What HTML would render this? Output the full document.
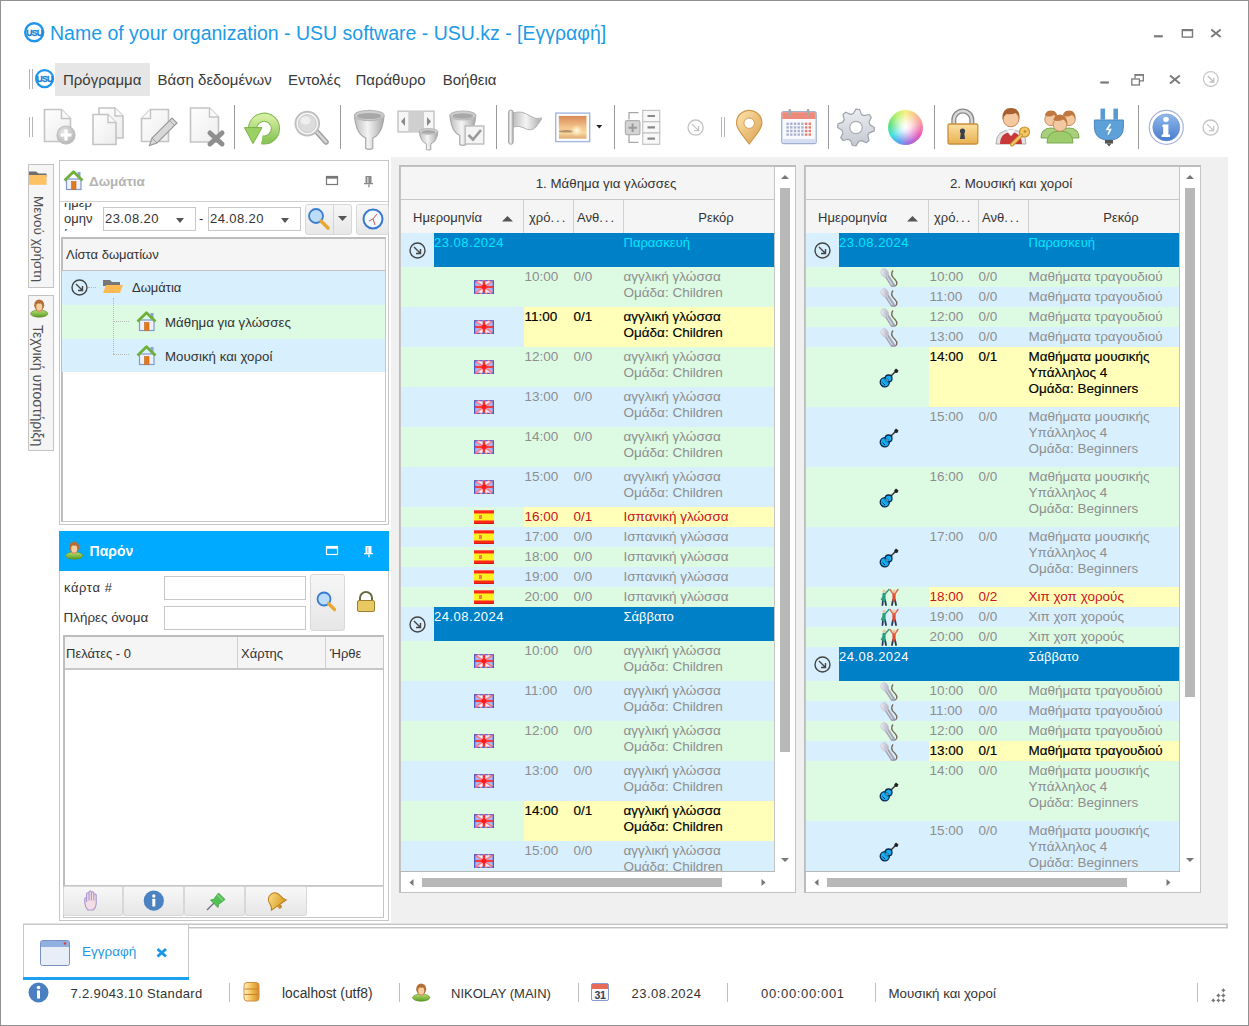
<!DOCTYPE html><html><head><meta charset="utf-8"><style>
*{margin:0;padding:0;box-sizing:border-box}
html,body{width:1249px;height:1026px;overflow:hidden;background:#fff}
body{font-family:"Liberation Sans",sans-serif;position:relative}
div{position:absolute}
.t{white-space:nowrap;line-height:1}
svg{position:absolute;overflow:visible}
</style></head><body>
<div style="left:0px;top:0px;width:1249px;height:1026px;border:1px solid #919191;background:#fff"></div>
<svg style="left:21.500000000000004px;top:20.099999999999998px" width="24.4" height="24.4"><circle cx="12.2" cy="12.2" r="9.0" fill="#fff" stroke="#1e96ec" stroke-width="2.4"/><text x="12.2" y="15.5" font-family="Liberation Sans" font-weight="700" font-size="8.6" text-anchor="middle" fill="#1880d8" stroke="#1880d8" stroke-width="0.3" letter-spacing="-0.7">USU</text></svg>
<div class="t" style="left:50px;top:24px;font-size:19.5px;color:#1c9be6">Name of your organization - USU software - USU.kz - [Εγγραφή]</div>
<svg style="left:1140px;top:20px" width="100" height="26"><rect x="14" y="15.2" width="8.8" height="2.2" fill="#7a7a7a"/><rect x="42.3" y="9.7" width="10.2" height="7.4" fill="none" stroke="#7a7a7a" stroke-width="1.4"/><rect x="42.3" y="9.2" width="10.2" height="2" fill="#7a7a7a"/><path d="M71.2 9.5 L80.7 17 M80.7 9.5 L71.2 17" stroke="#7a7a7a" stroke-width="1.9"/></svg>
<div style="left:29px;top:69px;width:1px;height:20px;background:#b5b5b5"></div>
<div style="left:32px;top:69px;width:1px;height:20px;background:#b5b5b5"></div>
<svg style="left:33.199999999999996px;top:67.10000000000001px" width="23.2" height="23.2"><circle cx="11.6" cy="11.6" r="8.5" fill="#fff" stroke="#1e96ec" stroke-width="2.2"/><text x="11.6" y="14.899999999999999" font-family="Liberation Sans" font-weight="700" font-size="8.6" text-anchor="middle" fill="#1880d8" stroke="#1880d8" stroke-width="0.3" letter-spacing="-0.7">USU</text></svg>
<div style="left:55px;top:63px;width:95px;height:33px;background:#e6e6e6"></div>
<div class="t" style="left:63px;top:72px;font-size:15px;color:#3a3a3a">Πρόγραμμα</div>
<div class="t" style="left:157.6px;top:72px;font-size:15px;color:#3a3a3a">Βάση δεδομένων</div>
<div class="t" style="left:288px;top:72px;font-size:15px;color:#3a3a3a">Εντολές</div>
<div class="t" style="left:355.4px;top:72px;font-size:15px;color:#3a3a3a">Παράθυρο</div>
<div class="t" style="left:442.7px;top:72px;font-size:15px;color:#3a3a3a">Βοήθεια</div>
<svg style="left:1090px;top:66px" width="140" height="26"><rect x="10.3" y="15.4" width="8.6" height="2.2" fill="#7a7a7a"/><rect x="41.8" y="13" width="7.6" height="6" fill="none" stroke="#7a7a7a" stroke-width="1.3"/><path d="M45 12.5 V8.7 H53.3 V14.8 H50" fill="none" stroke="#7a7a7a" stroke-width="1.3"/><rect x="45" y="8.2" width="8.3" height="1.6" fill="#7a7a7a"/><path d="M80 9.5 L89.8 17.5 M89.8 9.5 L80 17.5" stroke="#7a7a7a" stroke-width="1.9"/><circle cx="120.8" cy="13.1" r="7.4" fill="none" stroke="#c8c8c8" stroke-width="1.3"/><path d="M117.8 10 L123.8 16 M123.8 11.8 V16 H119.6" fill="none" stroke="#c0c0c0" stroke-width="1.3"/></svg>
<div style="left:29px;top:117px;width:1px;height:20px;background:#b5b5b5"></div>
<div style="left:32px;top:117px;width:1px;height:20px;background:#b5b5b5"></div>
<div style="left:234px;top:105px;width:1px;height:44px;background:#9a9a9a"></div>
<div style="left:340px;top:105px;width:1px;height:44px;background:#9a9a9a"></div>
<div style="left:496px;top:105px;width:1px;height:44px;background:#9a9a9a"></div>
<div style="left:614px;top:105px;width:1px;height:44px;background:#9a9a9a"></div>
<div style="left:828px;top:105px;width:1px;height:44px;background:#9a9a9a"></div>
<div style="left:934px;top:105px;width:1px;height:44px;background:#9a9a9a"></div>
<div style="left:1138px;top:105px;width:1px;height:44px;background:#9a9a9a"></div>
<div style="left:721px;top:117px;width:1px;height:20px;background:#b5b5b5"></div>
<div style="left:724px;top:117px;width:1px;height:20px;background:#b5b5b5"></div>
<svg style="left:0;top:0" width="1" height="1"><defs><linearGradient id="docg" x1="0" y1="0" x2="1" y2="1"><stop offset="0" stop-color="#ffffff"/><stop offset="1" stop-color="#ececec"/></linearGradient><radialGradient id="plusg" cx="0.4" cy="0.35" r="0.7"><stop offset="0" stop-color="#e6e6e6"/><stop offset="1" stop-color="#b4b4b4"/></radialGradient><linearGradient id="silv" x1="0" y1="0" x2="1" y2="0"><stop offset="0" stop-color="#bdbdbd"/><stop offset="0.45" stop-color="#f4f4f4"/><stop offset="1" stop-color="#a8a8a8"/></linearGradient><linearGradient id="greeng" x1="0" y1="0" x2="0" y2="1"><stop offset="0" stop-color="#d4eea0"/><stop offset="1" stop-color="#8cc65a"/></linearGradient></defs></svg><svg style="left:40px;top:104px" width="40" height="46"><path d="M4.5 5.5 h17 l9 9 v23 h-26 z" fill="url(#docg)" stroke="#c4c4c4" stroke-width="1.6"/><path d="M21.5 5.5 v9 h9" fill="#fafafa" stroke="#c4c4c4" stroke-width="1.4"/><circle cx="26" cy="31" r="9" fill="url(#plusg)" stroke="#bdbdbd" stroke-width="1.2"/><path d="M26 25.5 v11 M20.5 31 h11" stroke="#fff" stroke-width="3.2"/></svg><svg style="left:88px;top:104px" width="40" height="46"><path d="M11 4 h16 l8 8 v22 h-24 z" fill="url(#docg)" stroke="#c4c4c4" stroke-width="1.6"/><path d="M27 4 v8 h8" fill="#fafafa" stroke="#c4c4c4" stroke-width="1.4"/><path d="M5 10.5 h15 l8 8 v22 h-23 z" fill="url(#docg)" stroke="#c4c4c4" stroke-width="1.6"/><path d="M20 10.5 v8 h8" fill="#fafafa" stroke="#c4c4c4" stroke-width="1.4"/></svg><svg style="left:138px;top:104px" width="40" height="46"><path d="M12.5 5.5 h18 v32 h-27 v-23 z" fill="url(#docg)" stroke="#c4c4c4" stroke-width="1.6"/><path d="M12.5 5.5 v9 h-9" fill="#fafafa" stroke="#c4c4c4" stroke-width="1.4"/><path d="M11.5 41.5 l2.5 -7.5 l20 -20 l5 5 l-20 20 z" fill="#d8d8d8" stroke="#9a9a9a" stroke-width="1.2"/><path d="M14 34 l5 5" stroke="#9a9a9a" stroke-width="1"/><path d="M31.5 16.5 l5 5" stroke="#a0a0a0" stroke-width="1"/></svg><svg style="left:188px;top:104px" width="40" height="46"><path d="M2.5 4 h19 l9 9 v25 h-28 z" fill="url(#docg)" stroke="#c4c4c4" stroke-width="1.6"/><path d="M21.5 4 v9 h9" fill="#fafafa" stroke="#c4c4c4" stroke-width="1.4"/><path d="M22 29 l12 11 M34 29 l-12 11" stroke="#8e8e8e" stroke-width="5" stroke-linecap="round"/></svg><svg style="left:245px;top:108px" width="40" height="40"><path d="M8.5 25 A11.4 11.4 0 1 1 17 31.8" fill="none" stroke="#80b450" stroke-width="9.2"/><path d="M8.5 25 A11.4 11.4 0 1 1 17 31.8" fill="none" stroke="url(#greeng)" stroke-width="7.2"/><path d="M-0.5 19.6 h17.5 l-9 16 z" fill="#9ad064" stroke="#7cb048" stroke-width="1"/></svg><svg style="left:292px;top:108px" width="40" height="40"><path d="M25 24 l9 10" stroke="#a0a0a0" stroke-width="5.5" stroke-linecap="round"/><path d="M25 24 l9 10" stroke="#d8d8d8" stroke-width="2.5" stroke-linecap="round"/><circle cx="15.3" cy="15.6" r="11.8" fill="#fafafa" stroke="#c0c0c0" stroke-width="2"/><circle cx="15.3" cy="15.6" r="9" fill="#dcdcdc" stroke="#c8c8c8" stroke-width="1"/><ellipse cx="13.5" cy="12.5" rx="5" ry="4" fill="#efefef"/></svg><svg style="left:350px;top:106px" width="40" height="42"><path d="M4.5 9.5 q1.475 18.700000000000003 11.21 22.44 v10.54 q3.54 1.7000000000000002 7.08 0 v-10.54 q9.735000000000001 -3.74 11.21 -22.44 z" fill="url(#silv)" stroke="#a8a8a8" stroke-width="1.2"/><ellipse cx="19.25" cy="9.5" rx="14.75" ry="5.1" fill="#d0d0d0" stroke="#b8b8b8" stroke-width="1.2"/><ellipse cx="19.25" cy="10.0" rx="12.25" ry="3.06" fill="#a8a8a8"/></svg><svg style="left:396px;top:108px" width="44" height="40"><rect x="2" y="3.2" width="36" height="20.7" fill="#f6f6f6" stroke="#c4c4c4" stroke-width="1.4"/><rect x="12.3" y="3.5" width="15.7" height="20" fill="#cfcfcf"/><path d="M5 13.5 l4 -4.5 v9 z M31 9 l4 4.5 l-4 4.5 z" fill="#8a8a8a"/><path d="M23.3 23.4 q0.9300000000000002 10.340000000000002 7.0680000000000005 12.408000000000001 v5.828 q2.232 0.9400000000000001 4.464 0 v-5.828 q6.138000000000001 -2.068 7.0680000000000005 -12.408000000000001 z" fill="url(#silv)" stroke="#a8a8a8" stroke-width="1"/><ellipse cx="32.6" cy="23.4" rx="9.3" ry="2.82" fill="#d0d0d0" stroke="#b8b8b8" stroke-width="1"/><ellipse cx="32.6" cy="23.9" rx="6.800000000000001" ry="1.692" fill="#a8a8a8"/></svg><svg style="left:448px;top:106px" width="40" height="42"><path d="M2 9.5 q1.2850000000000001 16.5 9.766 19.8 v9.3 q3.0839999999999996 1.5 6.167999999999999 0 v-9.3 q8.481 -3.3 9.766 -19.8 z" fill="url(#silv)" stroke="#a8a8a8" stroke-width="1.2"/><ellipse cx="14.85" cy="9.5" rx="12.85" ry="4.5" fill="#d0d0d0" stroke="#b8b8b8" stroke-width="1.2"/><ellipse cx="14.85" cy="10.0" rx="10.35" ry="2.6999999999999997" fill="#a8a8a8"/><rect x="17.2" y="20" width="18.6" height="18" fill="#f4f4f4" stroke="#bcbcbc" stroke-width="1.4"/><path d="M20.5 29 l4.5 4.5 l8 -9.5" fill="none" stroke="#9a9a9a" stroke-width="2.6"/></svg><svg style="left:504px;top:106px" width="42" height="42"><path d="M9 7 q9 -3 17 3 q6 4 12 2 q-2 4 -6 9 q-5 5 -12 1 q-5 -3 -11 -1 z" fill="url(#silv)" stroke="#b4b4b4" stroke-width="1"/><rect x="4.6" y="4" width="4.6" height="34.3" rx="2.3" fill="url(#silv)" stroke="#a4a4a4" stroke-width="1"/></svg><svg style="left:553px;top:110px" width="52" height="36"><defs><linearGradient id="sky" x1="0" y1="0" x2="0" y2="1"><stop offset="0" stop-color="#d88a58"/><stop offset="0.5" stop-color="#f4c48c"/><stop offset="0.75" stop-color="#f8d8a0"/><stop offset="1" stop-color="#e0a870"/></linearGradient><radialGradient id="sun" cx="0.5" cy="0.5" r="0.5"><stop offset="0" stop-color="#fffbe8"/><stop offset="1" stop-color="#fff0c0" stop-opacity="0"/></radialGradient></defs><rect x="2.7" y="3.1" width="34" height="28.5" fill="#fff" stroke="#a4b6e0" stroke-width="1.4"/><rect x="5.8" y="5.9" width="27.7" height="22.7" fill="url(#sky)"/><path d="M6 21 q8 -2 14 0 v1 q-7 1 -14 0 z" fill="#8a6a50" opacity="0.6"/><circle cx="23.6" cy="20.4" r="6" fill="url(#sun)"/><path d="M43.3 15 h6 l-3 3.4 z" fill="#222"/></svg><svg style="left:622px;top:108px" width="42" height="40"><path d="M16.5 4.6 h-9.5 v7 M7 27 v7.3 h9.5" fill="none" stroke="#a8a8a8" stroke-width="1.3"/><rect x="3.4" y="12.7" width="14.5" height="14" rx="1.5" fill="#d4d4d4" stroke="#b0b0b0" stroke-width="1.2"/><path d="M10.6 15.5 v8.5 M6.4 19.7 h8.5" stroke="#9a9a9a" stroke-width="2"/><rect x="20.7" y="2.4" width="17" height="11.3" fill="#f8f8f8" stroke="#c4c4c4" stroke-width="1.2"/><rect x="20.7" y="13.7" width="17" height="11.3" fill="#f8f8f8" stroke="#c4c4c4" stroke-width="1.2"/><rect x="20.7" y="25" width="17" height="11.3" fill="#f8f8f8" stroke="#c4c4c4" stroke-width="1.2"/><path d="M25.5 8 h7.5 M25.5 19.3 h7.5 M25.5 30.6 h7.5" stroke="#8a8a8a" stroke-width="2.2"/></svg><svg style="left:686.4px;top:118.10000000000001px" width="19.2" height="19.2"><circle cx="9.6" cy="9.6" r="7.6" fill="none" stroke="#c4c4c4" stroke-width="1.3"/><path d="M6.1 6.1 L12.6 12.6 M12.6 8.1 V12.6 H8.1" fill="none" stroke="#c4c4c4" stroke-width="1.3"/></svg><svg style="left:732px;top:106px" width="36" height="42"><defs><linearGradient id="ping" x1="0" y1="0" x2="1" y2="1"><stop offset="0" stop-color="#fde6b0"/><stop offset="1" stop-color="#dca050"/></linearGradient></defs><path d="M17.2 38 C12 30 4.5 24 4.5 17 A12.7 12.7 0 0 1 29.9 17 C29.9 24 22.4 30 17.2 38 z" fill="url(#ping)" stroke="#d09848" stroke-width="1.2"/><circle cx="17.2" cy="17.2" r="5.2" fill="#fff" stroke="#c89040" stroke-width="0.8"/></svg><svg style="left:779px;top:106px" width="40" height="42"><rect x="2.7" y="5.6" width="34.5" height="32" rx="2" fill="#f8f9fc" stroke="#a0b0d4" stroke-width="1.3"/><rect x="3.3" y="6.2" width="33.3" height="6.8" fill="#ec8a7c"/><rect x="3.3" y="33" width="33.3" height="4" fill="#d6dff0"/><rect x="9.5" y="3" width="2.6" height="7" rx="1.2" fill="#a8a8a8"/><rect x="27.8" y="3" width="2.6" height="7" rx="1.2" fill="#a8a8a8"/><rect x="7.4" y="16.6" width="2.4" height="2.4" fill="#a8b2d0"/><rect x="11.1" y="16.6" width="2.4" height="2.4" fill="#a8b2d0"/><rect x="14.8" y="16.6" width="2.4" height="2.4" fill="#a8b2d0"/><rect x="18.5" y="16.6" width="2.4" height="2.4" fill="#a8b2d0"/><rect x="22.2" y="16.6" width="2.4" height="2.4" fill="#a8b2d0"/><rect x="25.9" y="16.6" width="2.4" height="2.4" fill="#ec7c6c"/><rect x="29.6" y="16.6" width="2.4" height="2.4" fill="#ec7c6c"/><rect x="7.4" y="20.2" width="2.4" height="2.4" fill="#a8b2d0"/><rect x="11.1" y="20.2" width="2.4" height="2.4" fill="#a8b2d0"/><rect x="14.8" y="20.2" width="2.4" height="2.4" fill="#a8b2d0"/><rect x="18.5" y="20.2" width="2.4" height="2.4" fill="#a8b2d0"/><rect x="22.2" y="20.2" width="2.4" height="2.4" fill="#a8b2d0"/><rect x="25.9" y="20.2" width="2.4" height="2.4" fill="#ec7c6c"/><rect x="29.6" y="20.2" width="2.4" height="2.4" fill="#ec7c6c"/><rect x="7.4" y="23.8" width="2.4" height="2.4" fill="#a8b2d0"/><rect x="11.1" y="23.8" width="2.4" height="2.4" fill="#a8b2d0"/><rect x="14.8" y="23.8" width="2.4" height="2.4" fill="#a8b2d0"/><rect x="18.5" y="23.8" width="2.4" height="2.4" fill="#a8b2d0"/><rect x="22.2" y="23.8" width="2.4" height="2.4" fill="#a8b2d0"/><rect x="25.9" y="23.8" width="2.4" height="2.4" fill="#ec7c6c"/><rect x="29.6" y="23.8" width="2.4" height="2.4" fill="#ec7c6c"/><rect x="7.4" y="27.4" width="2.4" height="2.4" fill="#a8b2d0"/><rect x="11.1" y="27.4" width="2.4" height="2.4" fill="#a8b2d0"/><rect x="14.8" y="27.4" width="2.4" height="2.4" fill="#a8b2d0"/><rect x="18.5" y="27.4" width="2.4" height="2.4" fill="#a8b2d0"/><rect x="22.2" y="27.4" width="2.4" height="2.4" fill="#a8b2d0"/><rect x="25.9" y="27.4" width="2.4" height="2.4" fill="#ec7c6c"/><rect x="29.6" y="27.4" width="2.4" height="2.4" fill="#ec7c6c"/></svg><svg style="left:835px;top:106px" width="42" height="42"><defs><linearGradient id="gearg" x1="0" y1="0" x2="0" y2="1"><stop offset="0" stop-color="#eceef2"/><stop offset="1" stop-color="#c4c8d0"/></linearGradient></defs><path d="M39.4 21.5 L39.0 25.1 L34.1 26.9 L32.8 29.4 L34.0 34.5 L31.2 36.8 L26.4 34.6 L23.8 35.4 L21.0 39.9 L17.4 39.5 L15.6 34.6 L13.1 33.3 L8.0 34.5 L5.7 31.7 L7.9 26.9 L7.1 24.3 L2.6 21.5 L3.0 17.9 L7.9 16.1 L9.2 13.6 L8.0 8.5 L10.8 6.2 L15.6 8.4 L18.2 7.6 L21.0 3.1 L24.6 3.5 L26.4 8.4 L28.9 9.7 L34.0 8.5 L36.3 11.3 L34.1 16.1 L34.9 18.7 z" fill="url(#gearg)" stroke="#a0a4ac" stroke-width="1.2" stroke-linejoin="round"/><circle cx="21" cy="21.5" r="6.2" fill="#fff" stroke="#a8acb4" stroke-width="1.2"/></svg><div style="left:888px;top:110px;width:35px;height:35px;border-radius:50%;background:conic-gradient(from 0deg,#f8f080,#f8a0a0 70deg,#e858b8 120deg,#a070e0 170deg,#50b0f0 210deg,#40e0e0 240deg,#60e080 280deg,#b0f070 320deg,#f8f080)"></div><div style="left:888px;top:110px;width:35px;height:35px;border-radius:50%;background:radial-gradient(circle,#fff 0%,rgba(255,255,255,0.8) 18%,rgba(255,255,255,0) 62%)"></div><svg style="left:944px;top:104px" width="38" height="44"><defs><linearGradient id="lockg" x1="0" y1="0" x2="0" y2="1"><stop offset="0" stop-color="#fbe0a0"/><stop offset="1" stop-color="#e8b050"/></linearGradient></defs><path d="M9.8 21 V16 a9 9 0 0 1 18 0 V21" fill="none" stroke="#8a8a8a" stroke-width="5"/><path d="M9.8 21 V16 a9 9 0 0 1 18 0 V21" fill="none" stroke="#d8d8d8" stroke-width="2.4"/><rect x="4" y="20" width="29.8" height="20" rx="1.5" fill="url(#lockg)" stroke="#c89040" stroke-width="1.3"/><circle cx="18.5" cy="27" r="2.6" fill="#384050"/><path d="M17 27 h3 l1 8 h-5 z" fill="#384050"/></svg><svg style="left:992px;top:104px" width="40" height="44"><path d="M4 40 q0 -14 15 -14 q15 0 15 14 z" fill="#e4e4e4" stroke="#b0b0b0" stroke-width="1"/><path d="M8 40 q0 -11 11 -12 q11 1 11 12 z" fill="#c83838"/><path d="M14 26 l5 6 l5 -6 z" fill="#fff" stroke="#ccc" stroke-width="0.6"/><circle cx="19" cy="15" r="7.8" fill="#f4c8a0" stroke="#c88a5a" stroke-width="1"/><path d="M10.5 16 q-1 -12 8.5 -12 q9.5 0 8.5 12 q-1 -6 -4 -7 q-3 2 -9 1 q-3 2 -4 6" fill="#a86030"/><circle cx="32.5" cy="28" r="5" fill="#f4c860" stroke="#c8903a" stroke-width="1.2"/><circle cx="33" cy="27.5" r="1.4" fill="#c8903a"/><path d="M29 31.5 l-9 9" stroke="#c8903a" stroke-width="4" stroke-linecap="round"/><path d="M29 31.5 l-9 9" stroke="#f4c860" stroke-width="2.2" stroke-linecap="round"/></svg><svg style="left:1038px;top:104px" width="44" height="44"><path d="M3 34 q0 -10 10 -10 q10 0 10 10 z" fill="#a8d07c" stroke="#7aaa50" stroke-width="1"/><path d="M21 34 q0 -10 10 -10 q10 0 10 10 z" fill="#a8d07c" stroke="#7aaa50" stroke-width="1"/><circle cx="13" cy="15.5" r="6.2" fill="#f2c8a0" stroke="#c0885a" stroke-width="0.9"/><path d="M6.3 16.5 q-0.5 -9.920000000000002 6.7 -9.920000000000002 q7.2 0 6.7 9.920000000000002 q-1 -4.34 -3.7199999999999998 -5.58 q-5.58 3.1 -9.3 0 z" fill="#c07840"/><circle cx="31" cy="15.5" r="6.2" fill="#f2c8a0" stroke="#c0885a" stroke-width="0.9"/><path d="M24.3 16.5 q-0.5 -9.920000000000002 6.7 -9.920000000000002 q7.2 0 6.7 9.920000000000002 q-1 -4.34 -3.7199999999999998 -5.58 q-5.58 3.1 -9.3 0 z" fill="#c07840"/><path d="M9 39 q0 -12 13 -12 q13 0 13 12 z" fill="#9ccc6c" stroke="#7aaa50" stroke-width="1"/><circle cx="22" cy="20.5" r="6.8" fill="#f2c8a0" stroke="#c0885a" stroke-width="0.9"/><path d="M14.7 21.5 q-0.5 -10.88 7.3 -10.88 q7.8 0 7.3 10.88 q-1 -4.76 -4.08 -6.12 q-6.12 3.4 -10.2 0 z" fill="#c07840"/></svg><svg style="left:1092px;top:104px" width="34" height="44"><rect x="8.5" y="4.6" width="4.6" height="11" fill="#5a9ad4"/><rect x="21.4" y="4.6" width="4.6" height="11" fill="#5a9ad4"/><path d="M2.4 16 h29 v7 q0 11 -11 13 h-7 q-11 -2 -11 -13 z" fill="#5ea0d8" stroke="#4a88c0" stroke-width="1"/><path d="M18.5 20 l-3.5 5.5 h3.5 l-2.5 5" fill="none" stroke="#fff" stroke-width="1.6"/><rect x="13" y="36" width="8" height="3.5" fill="#555"/><path d="M14.5 39.5 h5 l-2.5 3 z" fill="#555"/></svg><svg style="left:1146px;top:107px" width="42" height="42"><defs><linearGradient id="ig" x1="0" y1="0" x2="0" y2="1"><stop offset="0" stop-color="#90b8ec"/><stop offset="1" stop-color="#4a7ccc"/></linearGradient></defs><circle cx="20.3" cy="20.4" r="17" fill="#fff" stroke="#a8b4d8" stroke-width="1.2"/><circle cx="20.3" cy="20.4" r="13.5" fill="url(#ig)" stroke="#6a90d0" stroke-width="0.6"/><ellipse cx="20" cy="12.5" rx="2.8" ry="2.4" fill="#fff"/><path d="M16.8 17.5 h5.6 v10 h1.6 v2.6 h-8.4 v-2.6 h1.6 v-7.4 h-1 z" fill="#fff"/></svg><svg style="left:1201.2px;top:118.2px" width="19.2" height="19.2"><circle cx="9.6" cy="9.6" r="7.6" fill="none" stroke="#c4c4c4" stroke-width="1.3"/><path d="M6.1 6.1 L12.6 12.6 M12.6 8.1 V12.6 H8.1" fill="none" stroke="#c4c4c4" stroke-width="1.3"/></svg>
<div style="left:28px;top:164px;width:26px;height:124px;background:#f5f5f5;border:1px solid #c3c3c3"></div>
<svg style="left:28px;top:170px" width="20" height="16"><path d="M1 1.5 h7 l2.5 2 h8 v3.5 H1 z" fill="#6e6e6e"/><rect x="1" y="5" width="17.5" height="9.8" fill="#fcc264"/></svg>
<div class="t" style="left:31px;top:196px;font-size:13.5px;color:#505050;writing-mode:vertical-rl">Μενού χρήστη</div>
<div style="left:28px;top:295px;width:26px;height:156px;background:#f5f5f5;border:1px solid #c3c3c3"></div>
<svg style="left:30px;top:299px" width="19" height="19"><defs><linearGradient id="pg30299" x1="0" y1="0" x2="0" y2="1"><stop offset="0" stop-color="#b8e070"/><stop offset="1" stop-color="#5c9c24"/></linearGradient></defs><ellipse cx="9.2" cy="14.6" rx="8.6" ry="3.6" fill="url(#pg30299)" stroke="#5a8a2a" stroke-width="0.6"/><rect x="7.3" y="9" width="3.8" height="4" fill="#d89a68"/><ellipse cx="9.2" cy="6.2" rx="5" ry="5.8" fill="#b86e34"/><ellipse cx="9.2" cy="7.8" rx="3" ry="4" fill="#f6cfa0"/><path d="M5.5 5 q3.5 -3 7.5 0 q-1.5 -1 -3.7 -0.6 q-2.2 -0.4 -3.8 0.6" fill="#8a4a1a"/></svg>
<div class="t" style="left:31px;top:325px;font-size:14px;color:#505050;writing-mode:vertical-rl">Τεχνική υποστήριξη</div>
<div style="left:59px;top:160px;width:330px;height:365px;border:1px solid #c6c6c6;background:#fff"></div>
<svg style="left:63px;top:170px" width="22" height="21"><rect x="14.5" y="2" width="3" height="6" fill="#8aa0d8"/><rect x="3.5" y="9" width="14.5" height="10.5" fill="#eef1fa" stroke="#8298d0" stroke-width="1.2"/><rect x="8.5" y="11.5" width="4.5" height="8" fill="#e07a20" stroke="#c86a18" stroke-width="0.6"/><path d="M1.5 10.5 L10.5 1.8 L19.5 10.5" fill="none" stroke="#70b03a" stroke-width="2.8" stroke-linejoin="round"/></svg>
<div class="t" style="left:89px;top:175px;font-size:13.5px;font-weight:700;color:#b4b4b4">Δωμάτια</div>
<svg style="left:324px;top:174px" width="50" height="16"><rect x="2.5" y="2.5" width="11" height="8" fill="none" stroke="#777" stroke-width="1.2"/><rect x="2.5" y="2.5" width="11" height="2.2" fill="#777"/><path d="M41.5 2 h6 v7 h1.5 v1.3 h-9 v-1.3 h1.5 z" fill="#8a8a8a"/><rect x="43" y="3" width="1.6" height="6" fill="#c8c8c8"/><rect x="44.3" y="10.3" width="1.3" height="3" fill="#8a8a8a"/></svg>
<div style="left:60px;top:201px;width:328px;height:1px;background:#d0d0d0"></div>
<div style="left:63px;top:203px;width:38px;height:28px;overflow:hidden"><div class="t" style="left:1px;top:-8px;font-size:13px;color:#333;line-height:16px;white-space:normal;width:38px">ημερ ομην ία</div></div>
<div style="left:103px;top:207px;width:93px;height:24px;border:1px solid #c8c8c8;background:#fff"></div>
<div class="t" style="left:105px;top:212px;font-size:13px;color:#333;letter-spacing:0.4px">23.08.20</div>
<svg style="left:175.5px;top:217.5px" width="10" height="6"><path d="M0 0 h8 l-4 5 z" fill="#555"/></svg>
<div style="left:208px;top:207px;width:93px;height:24px;border:1px solid #c8c8c8;background:#fff"></div>
<div class="t" style="left:210px;top:212px;font-size:13px;color:#333;letter-spacing:0.4px">24.08.20</div>
<svg style="left:280.5px;top:217.5px" width="10" height="6"><path d="M0 0 h8 l-4 5 z" fill="#555"/></svg>
<div class="t" style="left:199px;top:212px;font-size:13px;color:#333">-</div>
<div style="left:305px;top:204px;width:47px;height:31px;border:1px solid #d8d8d8;border-radius:3px;background:linear-gradient(#f6f6f6,#e8e8e8)"></div>
<div style="left:333px;top:205px;width:1px;height:29px;background:#d4d4d4"></div>
<svg style="left:307px;top:207px" width="24" height="24"><circle cx="9" cy="9" r="7" fill="#bcdcfa" stroke="#3a7cd0" stroke-width="1.8"/><path d="M14 14 l7 7" stroke="#e8a830" stroke-width="3.5" stroke-linecap="round"/></svg>
<svg style="left:338px;top:216px" width="10" height="6"><path d="M0 0 h9 l-4.5 5 z" fill="#555"/></svg>
<div style="left:356px;top:204px;width:33px;height:31px;border:1px solid #d8d8d8;border-radius:3px;background:linear-gradient(#f6f6f6,#e8e8e8)"></div>
<svg style="left:362px;top:208px" width="22" height="22"><circle cx="11" cy="11" r="9.5" fill="#f4f8ff" stroke="#3a78d0" stroke-width="2"/><path d="M11 11 l4 -5 M11 11 l2 6 M11 11 l-4 2" stroke="#e05050" stroke-width="1"/></svg>
<div style="left:61px;top:237px;width:325px;height:285px;border:1px solid #c6c6c6;border-left:2px solid #bdbdbd;border-top:2px solid #bdbdbd;background:#fff"></div>
<div style="left:63px;top:239px;width:322px;height:32px;background:#f5f5f5;border-bottom:1px solid #c4c4c4"></div>
<div class="t" style="left:66px;top:248px;font-size:13px;color:#333">Λίστα δωματίων</div>
<div style="left:62px;top:271px;width:323px;height:34px;background:#d8f0fe"></div>
<div style="left:62px;top:305px;width:323px;height:34px;background:#ddfae3"></div>
<div style="left:62px;top:339px;width:323px;height:33px;background:#d8f0fe"></div>
<svg style="left:69.8px;top:278.0px" width="19.0" height="19.0"><circle cx="9.5" cy="9.5" r="7.5" fill="none" stroke="#444" stroke-width="1.4"/><path d="M6.0 6.0 L12.5 12.5 M12.5 8.0 V12.5 H8.0" fill="none" stroke="#444" stroke-width="1.4"/></svg>
<div style="left:88px;top:287px;width:8px;border-top:1px dotted #b8b8b8"></div>
<div style="left:113px;top:298px;height:56px;border-left:1px dotted #b8b8b8"></div>
<div style="left:113px;top:321px;width:16px;border-top:1px dotted #b8b8b8"></div>
<div style="left:113px;top:354px;width:16px;border-top:1px dotted #b8b8b8"></div>
<svg style="left:102px;top:279px" width="22" height="16"><path d="M1 1 h7 l2 2 h8 v4 H1 z" fill="#777"/><path d="M1 14 l3 -8 h17 l-3 8 z" fill="#fcb955"/></svg>
<div class="t" style="left:132px;top:281px;font-size:13px;color:#333">Δωμάτια</div>
<svg style="left:136px;top:311px" width="22" height="21"><rect x="14.5" y="2" width="3" height="6" fill="#8aa0d8"/><rect x="3.5" y="9" width="14.5" height="10.5" fill="#eef1fa" stroke="#8298d0" stroke-width="1.2"/><rect x="8.5" y="11.5" width="4.5" height="8" fill="#e07a20" stroke="#c86a18" stroke-width="0.6"/><path d="M1.5 10.5 L10.5 1.8 L19.5 10.5" fill="none" stroke="#70b03a" stroke-width="2.8" stroke-linejoin="round"/></svg>
<div class="t" style="left:165px;top:316px;font-size:13.3px;color:#333">Μάθημα για γλώσσες</div>
<svg style="left:136px;top:345px" width="22" height="21"><rect x="14.5" y="2" width="3" height="6" fill="#8aa0d8"/><rect x="3.5" y="9" width="14.5" height="10.5" fill="#eef1fa" stroke="#8298d0" stroke-width="1.2"/><rect x="8.5" y="11.5" width="4.5" height="8" fill="#e07a20" stroke="#c86a18" stroke-width="0.6"/><path d="M1.5 10.5 L10.5 1.8 L19.5 10.5" fill="none" stroke="#70b03a" stroke-width="2.8" stroke-linejoin="round"/></svg>
<div class="t" style="left:165px;top:350px;font-size:13.3px;color:#333">Μουσική και χοροί</div>
<div style="left:59px;top:531px;width:330px;height:390px;border:1px solid #c6c6c6;background:#fff"></div>
<div style="left:59px;top:531px;width:330px;height:40px;background:#00aaff"></div>
<svg style="left:64.5px;top:540.5px" width="19" height="19"><defs><linearGradient id="pg64540" x1="0" y1="0" x2="0" y2="1"><stop offset="0" stop-color="#b8e070"/><stop offset="1" stop-color="#5c9c24"/></linearGradient></defs><ellipse cx="9.2" cy="14.6" rx="8.6" ry="3.6" fill="url(#pg64540)" stroke="#5a8a2a" stroke-width="0.6"/><rect x="7.3" y="9" width="3.8" height="4" fill="#d89a68"/><ellipse cx="9.2" cy="6.2" rx="5" ry="5.8" fill="#b86e34"/><ellipse cx="9.2" cy="7.8" rx="3" ry="4" fill="#f6cfa0"/><path d="M5.5 5 q3.5 -3 7.5 0 q-1.5 -1 -3.7 -0.6 q-2.2 -0.4 -3.8 0.6" fill="#8a4a1a"/></svg>
<div class="t" style="left:89.6px;top:544px;font-size:14px;font-weight:700;color:#fff">Παρόν</div>
<svg style="left:324px;top:544px" width="50" height="16"><rect x="2.5" y="2.5" width="11" height="8" fill="none" stroke="#fff" stroke-width="1.2"/><rect x="2.5" y="2.5" width="11" height="2.2" fill="#fff"/><path d="M41.5 2 h6 v7 h1.5 v1.3 h-9 v-1.3 h1.5 z" fill="#fff"/><rect x="43" y="3" width="1.6" height="6" fill="#9ad4ff"/><rect x="44.3" y="10.3" width="1.3" height="3" fill="#fff"/></svg>
<div class="t" style="left:64px;top:581px;font-size:13px;color:#333;letter-spacing:0.6px">κάρτα #</div>
<div class="t" style="left:63.6px;top:611px;font-size:13.4px;color:#333">Πλήρες όνομα</div>
<div style="left:164px;top:576px;width:142px;height:24px;border:1px solid #c8c8c8;background:#fff"></div>
<div style="left:164px;top:606px;width:142px;height:24px;border:1px solid #c8c8c8;background:#fff"></div>
<div style="left:310px;top:574px;width:35px;height:57px;border:1px solid #d8d8d8;border-radius:3px;background:linear-gradient(#f6f6f6,#e6e6e6)"></div>
<svg style="left:315px;top:590px" width="24" height="24"><circle cx="9" cy="9" r="6.5" fill="#bcdcfa" stroke="#3a7cd0" stroke-width="1.8"/><path d="M13.5 13.5 l6 6" stroke="#e8a830" stroke-width="3.2" stroke-linecap="round"/></svg>
<svg style="left:356px;top:591px" width="20" height="22"><path d="M4 10 V7 a6 6 0 0 1 12 0 V10" fill="none" stroke="#6a6a40" stroke-width="2"/><rect x="1.5" y="9.5" width="17" height="11" rx="1.5" fill="#e8c860" stroke="#9a8030"/></svg>
<div style="left:63px;top:635px;width:321px;height:251px;border:1px solid #c6c6c6;border-left:2px solid #bdbdbd;border-top:2px solid #bdbdbd;background:#fff"></div>
<div style="left:65px;top:637px;width:318px;height:33px;background:#f5f5f5;border-bottom:2px solid #c8c8c8"></div>
<div style="left:237px;top:637px;width:1px;height:32px;background:#d0d0d0"></div>
<div style="left:325px;top:637px;width:1px;height:32px;background:#d0d0d0"></div>
<div class="t" style="left:66px;top:647px;font-size:13px;color:#333">Πελάτες - 0</div>
<div class="t" style="left:241px;top:647px;font-size:13px;color:#333">Χάρτης</div>
<div class="t" style="left:330px;top:647px;font-size:13px;color:#333">Ήρθε</div>
<div style="left:63px;top:886px;width:321px;height:32px;background:#fff;border:1px solid #c6c6c6;border-top:1px solid #d0d0d0"></div>
<div style="left:63px;top:886px;width:60px;height:30px;background:linear-gradient(#f8f8f8,#e6e6e6);border:1px solid #d8d8d8;border-radius:2px"></div>
<div style="left:123px;top:886px;width:61px;height:30px;background:linear-gradient(#f8f8f8,#e6e6e6);border:1px solid #d8d8d8;border-radius:2px"></div>
<div style="left:184px;top:886px;width:61px;height:30px;background:linear-gradient(#f8f8f8,#e6e6e6);border:1px solid #d8d8d8;border-radius:2px"></div>
<div style="left:245px;top:886px;width:62px;height:30px;background:linear-gradient(#f8f8f8,#e6e6e6);border:1px solid #d8d8d8;border-radius:2px"></div>
<svg style="left:83px;top:889px" width="20" height="24"><path d="M5 21 q-3 -3 -3.2 -7 v-4.5 q0.9 -1.5 1.8 0 v3 V4.5 q1.2 -1.6 2.4 0 V11 V2.8 q1.2 -1.6 2.4 0 V11 V3.6 q1.2 -1.6 2.4 0 V11 V5.8 q1.2 -1.6 2.4 0 V15 q-0.3 4 -3 6 z" fill="#f4dce4" stroke="#a898d0" stroke-width="1.1" stroke-linejoin="round"/></svg>
<svg style="left:143px;top:890px" width="22" height="22"><circle cx="10.8" cy="10.7" r="10.1" fill="#4a82c2"/><circle cx="10.8" cy="6" r="1.7" fill="#fff"/><rect x="9.3" y="8.8" width="3" height="7.6" rx="0.5" fill="#fff"/></svg>
<svg style="left:203px;top:890px" width="24" height="22"><path d="M4 20 l7 -7" stroke="#6a6a80" stroke-width="1.3"/><path d="M10.5 9.5 l5 -6.5 l6.5 6.5 l-6.5 5 l-0.5 3 l-7.5 -7.5 z" fill="#52c052" stroke="#3a9a3a" stroke-width="0.8"/><path d="M14 4.5 l6 6" stroke="#7ad87a" stroke-width="1.5"/></svg>
<svg style="left:263px;top:889px" width="26" height="24"><defs><linearGradient id="bellg" x1="0" y1="0" x2="1" y2="1"><stop offset="0" stop-color="#fce890"/><stop offset="1" stop-color="#d89820"/></linearGradient></defs><g transform="rotate(-35 13 12)"><path d="M4 17 q2 -2 2.5 -7 q0.5 -6 6.5 -6.5 q6 0.5 6.5 6.5 q0.5 5 2.5 7 z" fill="url(#bellg)" stroke="#b88020" stroke-width="1"/><circle cx="13" cy="19" r="2" fill="#c89030"/></g></svg>
<div style="left:391px;top:157px;width:837px;height:767px;background:#f0f0f0"></div>
<div style="left:399px;top:165px;width:397px;height:728px;background:#fff;border:1px solid #c4c4c4;border-left:2px solid #bcbcbc;border-top:2px solid #bcbcbc"></div><div style="left:400px;top:166px;width:375px;height:34px;background:#f5f5f5;border:1px solid #c4c4c4;border-right:1px solid #c4c4c4"></div><div class="t" style="left:400px;top:177px;width:412px;text-align:center;font-size:13.3px;color:#333">1. Μάθημα για γλώσσες</div><div style="left:400px;top:199px;width:375px;height:35px;background:#f5f5f5;border:1px solid #c4c4c4;border-top:1px solid #c8c8c8"></div><div style="left:523px;top:200px;width:1px;height:33px;background:#d0d0d0"></div><div style="left:573px;top:200px;width:1px;height:33px;background:#d0d0d0"></div><div style="left:623px;top:200px;width:1px;height:33px;background:#d0d0d0"></div><div class="t" style="left:413px;top:211px;font-size:13px;color:#333">Ημερομηνία</div><svg style="left:501.5px;top:215.5px" width="12" height="7"><path d="M0 5.5 L5.5 0 L11 5.5 z" fill="#555"/></svg><div class="t" style="left:529px;top:211px;font-size:13px;color:#333">χρό<span style='letter-spacing:2px'>...</span></div><div class="t" style="left:577px;top:211px;font-size:13px;color:#333">Ανθ<span style='letter-spacing:2px'>...</span></div><div class="t" style="left:623px;top:211px;width:186px;text-align:center;font-size:13px;color:#333">Ρεκόρ</div><div style="left:401px;top:233px;width:374px;height:638px;overflow:hidden"><div style="left:0px;top:0px;width:33px;height:34px;background:#d8f0fe"></div><div style="left:33px;top:0px;width:341px;height:34px;background:#0080c6"></div><svg style="left:6.5px;top:7.5px" width="19.0" height="19.0"><circle cx="9.5" cy="9.5" r="7.5" fill="none" stroke="#444" stroke-width="1.4"/><path d="M6.0 6.0 L12.5 12.5 M12.5 8.0 V12.5 H8.0" fill="none" stroke="#444" stroke-width="1.4"/></svg><div class="t" style="left:33px;top:2.5px;font-size:13px;color:#00e8ff;letter-spacing:0.5px">23.08.2024</div><div class="t" style="left:222.5px;top:2.5px;font-size:13px;color:#00e8ff">Παρασκευή</div><div style="left:0px;top:34px;width:374px;height:40px;background:#ddfae3"></div><svg style="left:73px;top:47px" width="20" height="14"><rect x="0" y="0" width="20" height="14" fill="#eef0fc"/><path d="M1 2 L7 6 H1 z M19 2 L13 6 H19 z M1 12 L7 8 H1 z M19 12 L13 8 H19 z" fill="#a8b8f4"/><path d="M1 1 L19 13 M19 1 L1 13" stroke="#f47a8a" stroke-width="1.6"/><path d="M10 1 V13" stroke="#ff2a2a" stroke-width="2.6"/><path d="M1 7 H19" stroke="#ff3a3a" stroke-width="2.2"/><circle cx="10" cy="7" r="2.4" fill="#ff1a1a"/><path d="M0 0.6 H20 M0 13.4 H20" stroke="#e87080" stroke-width="1.2"/><rect x="0.6" y="0.6" width="18.8" height="12.8" fill="none" stroke="#5a6ad8" stroke-width="1.2" stroke-dasharray="3 2"/><path d="M0.6 0.6 V13.4 M19.4 0.6 V13.4" stroke="#4a5ac8" stroke-width="1.2"/></svg><div class="t" style="left:123.5px;top:36.5px;font-size:13.5px;color:#8e8e8e;font-weight:400">10:00</div><div class="t" style="left:172.5px;top:36.5px;font-size:13.5px;color:#8e8e8e;font-weight:400">0/0</div><div class="t" style="left:222.5px;top:36.5px;font-size:13.5px;color:#8e8e8e;font-weight:400">αγγλική γλώσσα</div><div class="t" style="left:222.5px;top:52.5px;font-size:13.5px;color:#8e8e8e;font-weight:400">Ομάδα: Children</div><div style="left:0px;top:74px;width:374px;height:40px;background:#d8f0fe"></div><div style="left:123px;top:74px;width:251px;height:40px;background:#ffffb9"></div><svg style="left:73px;top:87px" width="20" height="14"><rect x="0" y="0" width="20" height="14" fill="#eef0fc"/><path d="M1 2 L7 6 H1 z M19 2 L13 6 H19 z M1 12 L7 8 H1 z M19 12 L13 8 H19 z" fill="#a8b8f4"/><path d="M1 1 L19 13 M19 1 L1 13" stroke="#f47a8a" stroke-width="1.6"/><path d="M10 1 V13" stroke="#ff2a2a" stroke-width="2.6"/><path d="M1 7 H19" stroke="#ff3a3a" stroke-width="2.2"/><circle cx="10" cy="7" r="2.4" fill="#ff1a1a"/><path d="M0 0.6 H20 M0 13.4 H20" stroke="#e87080" stroke-width="1.2"/><rect x="0.6" y="0.6" width="18.8" height="12.8" fill="none" stroke="#5a6ad8" stroke-width="1.2" stroke-dasharray="3 2"/><path d="M0.6 0.6 V13.4 M19.4 0.6 V13.4" stroke="#4a5ac8" stroke-width="1.2"/></svg><div class="t" style="left:123.5px;top:76.5px;font-size:13.5px;color:#000;font-weight:400;-webkit-text-stroke:0.15px #000">11:00</div><div class="t" style="left:172.5px;top:76.5px;font-size:13.5px;color:#000;font-weight:400;-webkit-text-stroke:0.15px #000">0/1</div><div class="t" style="left:222.5px;top:76.5px;font-size:13.5px;color:#000;font-weight:400;-webkit-text-stroke:0.15px #000">αγγλική γλώσσα</div><div class="t" style="left:222.5px;top:92.5px;font-size:13.5px;color:#000;font-weight:400;-webkit-text-stroke:0.15px #000">Ομάδα: Children</div><div style="left:0px;top:114px;width:374px;height:40px;background:#ddfae3"></div><svg style="left:73px;top:127px" width="20" height="14"><rect x="0" y="0" width="20" height="14" fill="#eef0fc"/><path d="M1 2 L7 6 H1 z M19 2 L13 6 H19 z M1 12 L7 8 H1 z M19 12 L13 8 H19 z" fill="#a8b8f4"/><path d="M1 1 L19 13 M19 1 L1 13" stroke="#f47a8a" stroke-width="1.6"/><path d="M10 1 V13" stroke="#ff2a2a" stroke-width="2.6"/><path d="M1 7 H19" stroke="#ff3a3a" stroke-width="2.2"/><circle cx="10" cy="7" r="2.4" fill="#ff1a1a"/><path d="M0 0.6 H20 M0 13.4 H20" stroke="#e87080" stroke-width="1.2"/><rect x="0.6" y="0.6" width="18.8" height="12.8" fill="none" stroke="#5a6ad8" stroke-width="1.2" stroke-dasharray="3 2"/><path d="M0.6 0.6 V13.4 M19.4 0.6 V13.4" stroke="#4a5ac8" stroke-width="1.2"/></svg><div class="t" style="left:123.5px;top:116.5px;font-size:13.5px;color:#8e8e8e;font-weight:400">12:00</div><div class="t" style="left:172.5px;top:116.5px;font-size:13.5px;color:#8e8e8e;font-weight:400">0/0</div><div class="t" style="left:222.5px;top:116.5px;font-size:13.5px;color:#8e8e8e;font-weight:400">αγγλική γλώσσα</div><div class="t" style="left:222.5px;top:132.5px;font-size:13.5px;color:#8e8e8e;font-weight:400">Ομάδα: Children</div><div style="left:0px;top:154px;width:374px;height:40px;background:#d8f0fe"></div><svg style="left:73px;top:167px" width="20" height="14"><rect x="0" y="0" width="20" height="14" fill="#eef0fc"/><path d="M1 2 L7 6 H1 z M19 2 L13 6 H19 z M1 12 L7 8 H1 z M19 12 L13 8 H19 z" fill="#a8b8f4"/><path d="M1 1 L19 13 M19 1 L1 13" stroke="#f47a8a" stroke-width="1.6"/><path d="M10 1 V13" stroke="#ff2a2a" stroke-width="2.6"/><path d="M1 7 H19" stroke="#ff3a3a" stroke-width="2.2"/><circle cx="10" cy="7" r="2.4" fill="#ff1a1a"/><path d="M0 0.6 H20 M0 13.4 H20" stroke="#e87080" stroke-width="1.2"/><rect x="0.6" y="0.6" width="18.8" height="12.8" fill="none" stroke="#5a6ad8" stroke-width="1.2" stroke-dasharray="3 2"/><path d="M0.6 0.6 V13.4 M19.4 0.6 V13.4" stroke="#4a5ac8" stroke-width="1.2"/></svg><div class="t" style="left:123.5px;top:156.5px;font-size:13.5px;color:#8e8e8e;font-weight:400">13:00</div><div class="t" style="left:172.5px;top:156.5px;font-size:13.5px;color:#8e8e8e;font-weight:400">0/0</div><div class="t" style="left:222.5px;top:156.5px;font-size:13.5px;color:#8e8e8e;font-weight:400">αγγλική γλώσσα</div><div class="t" style="left:222.5px;top:172.5px;font-size:13.5px;color:#8e8e8e;font-weight:400">Ομάδα: Children</div><div style="left:0px;top:194px;width:374px;height:40px;background:#ddfae3"></div><svg style="left:73px;top:207px" width="20" height="14"><rect x="0" y="0" width="20" height="14" fill="#eef0fc"/><path d="M1 2 L7 6 H1 z M19 2 L13 6 H19 z M1 12 L7 8 H1 z M19 12 L13 8 H19 z" fill="#a8b8f4"/><path d="M1 1 L19 13 M19 1 L1 13" stroke="#f47a8a" stroke-width="1.6"/><path d="M10 1 V13" stroke="#ff2a2a" stroke-width="2.6"/><path d="M1 7 H19" stroke="#ff3a3a" stroke-width="2.2"/><circle cx="10" cy="7" r="2.4" fill="#ff1a1a"/><path d="M0 0.6 H20 M0 13.4 H20" stroke="#e87080" stroke-width="1.2"/><rect x="0.6" y="0.6" width="18.8" height="12.8" fill="none" stroke="#5a6ad8" stroke-width="1.2" stroke-dasharray="3 2"/><path d="M0.6 0.6 V13.4 M19.4 0.6 V13.4" stroke="#4a5ac8" stroke-width="1.2"/></svg><div class="t" style="left:123.5px;top:196.5px;font-size:13.5px;color:#8e8e8e;font-weight:400">14:00</div><div class="t" style="left:172.5px;top:196.5px;font-size:13.5px;color:#8e8e8e;font-weight:400">0/0</div><div class="t" style="left:222.5px;top:196.5px;font-size:13.5px;color:#8e8e8e;font-weight:400">αγγλική γλώσσα</div><div class="t" style="left:222.5px;top:212.5px;font-size:13.5px;color:#8e8e8e;font-weight:400">Ομάδα: Children</div><div style="left:0px;top:234px;width:374px;height:40px;background:#d8f0fe"></div><svg style="left:73px;top:247px" width="20" height="14"><rect x="0" y="0" width="20" height="14" fill="#eef0fc"/><path d="M1 2 L7 6 H1 z M19 2 L13 6 H19 z M1 12 L7 8 H1 z M19 12 L13 8 H19 z" fill="#a8b8f4"/><path d="M1 1 L19 13 M19 1 L1 13" stroke="#f47a8a" stroke-width="1.6"/><path d="M10 1 V13" stroke="#ff2a2a" stroke-width="2.6"/><path d="M1 7 H19" stroke="#ff3a3a" stroke-width="2.2"/><circle cx="10" cy="7" r="2.4" fill="#ff1a1a"/><path d="M0 0.6 H20 M0 13.4 H20" stroke="#e87080" stroke-width="1.2"/><rect x="0.6" y="0.6" width="18.8" height="12.8" fill="none" stroke="#5a6ad8" stroke-width="1.2" stroke-dasharray="3 2"/><path d="M0.6 0.6 V13.4 M19.4 0.6 V13.4" stroke="#4a5ac8" stroke-width="1.2"/></svg><div class="t" style="left:123.5px;top:236.5px;font-size:13.5px;color:#8e8e8e;font-weight:400">15:00</div><div class="t" style="left:172.5px;top:236.5px;font-size:13.5px;color:#8e8e8e;font-weight:400">0/0</div><div class="t" style="left:222.5px;top:236.5px;font-size:13.5px;color:#8e8e8e;font-weight:400">αγγλική γλώσσα</div><div class="t" style="left:222.5px;top:252.5px;font-size:13.5px;color:#8e8e8e;font-weight:400">Ομάδα: Children</div><div style="left:0px;top:274px;width:374px;height:20px;background:#ddfae3"></div><div style="left:123px;top:274px;width:251px;height:20px;background:#ffffb9"></div><svg style="left:73px;top:277px" width="20" height="14"><rect x="0" y="0" width="20" height="14" fill="#ff2818"/><rect x="0" y="3.5" width="20" height="7" fill="#fff020"/><rect x="0" y="0" width="20" height="1" fill="#ff6050"/><rect x="0" y="13" width="20" height="1" fill="#d81a10"/><rect x="5" y="5" width="3" height="4" fill="#e88060"/></svg><div class="t" style="left:123.5px;top:276.5px;font-size:13.5px;color:#c8141e;font-weight:400">16:00</div><div class="t" style="left:172.5px;top:276.5px;font-size:13.5px;color:#c8141e;font-weight:400">0/1</div><div class="t" style="left:222.5px;top:276.5px;font-size:13.5px;color:#c8141e;font-weight:400">Ισπανική γλώσσα</div><div style="left:0px;top:294px;width:374px;height:20px;background:#d8f0fe"></div><svg style="left:73px;top:297px" width="20" height="14"><rect x="0" y="0" width="20" height="14" fill="#ff2818"/><rect x="0" y="3.5" width="20" height="7" fill="#fff020"/><rect x="0" y="0" width="20" height="1" fill="#ff6050"/><rect x="0" y="13" width="20" height="1" fill="#d81a10"/><rect x="5" y="5" width="3" height="4" fill="#e88060"/></svg><div class="t" style="left:123.5px;top:296.5px;font-size:13.5px;color:#8e8e8e;font-weight:400">17:00</div><div class="t" style="left:172.5px;top:296.5px;font-size:13.5px;color:#8e8e8e;font-weight:400">0/0</div><div class="t" style="left:222.5px;top:296.5px;font-size:13.5px;color:#8e8e8e;font-weight:400">Ισπανική γλώσσα</div><div style="left:0px;top:314px;width:374px;height:20px;background:#ddfae3"></div><svg style="left:73px;top:317px" width="20" height="14"><rect x="0" y="0" width="20" height="14" fill="#ff2818"/><rect x="0" y="3.5" width="20" height="7" fill="#fff020"/><rect x="0" y="0" width="20" height="1" fill="#ff6050"/><rect x="0" y="13" width="20" height="1" fill="#d81a10"/><rect x="5" y="5" width="3" height="4" fill="#e88060"/></svg><div class="t" style="left:123.5px;top:316.5px;font-size:13.5px;color:#8e8e8e;font-weight:400">18:00</div><div class="t" style="left:172.5px;top:316.5px;font-size:13.5px;color:#8e8e8e;font-weight:400">0/0</div><div class="t" style="left:222.5px;top:316.5px;font-size:13.5px;color:#8e8e8e;font-weight:400">Ισπανική γλώσσα</div><div style="left:0px;top:334px;width:374px;height:20px;background:#d8f0fe"></div><svg style="left:73px;top:337px" width="20" height="14"><rect x="0" y="0" width="20" height="14" fill="#ff2818"/><rect x="0" y="3.5" width="20" height="7" fill="#fff020"/><rect x="0" y="0" width="20" height="1" fill="#ff6050"/><rect x="0" y="13" width="20" height="1" fill="#d81a10"/><rect x="5" y="5" width="3" height="4" fill="#e88060"/></svg><div class="t" style="left:123.5px;top:336.5px;font-size:13.5px;color:#8e8e8e;font-weight:400">19:00</div><div class="t" style="left:172.5px;top:336.5px;font-size:13.5px;color:#8e8e8e;font-weight:400">0/0</div><div class="t" style="left:222.5px;top:336.5px;font-size:13.5px;color:#8e8e8e;font-weight:400">Ισπανική γλώσσα</div><div style="left:0px;top:354px;width:374px;height:20px;background:#ddfae3"></div><svg style="left:73px;top:357px" width="20" height="14"><rect x="0" y="0" width="20" height="14" fill="#ff2818"/><rect x="0" y="3.5" width="20" height="7" fill="#fff020"/><rect x="0" y="0" width="20" height="1" fill="#ff6050"/><rect x="0" y="13" width="20" height="1" fill="#d81a10"/><rect x="5" y="5" width="3" height="4" fill="#e88060"/></svg><div class="t" style="left:123.5px;top:356.5px;font-size:13.5px;color:#8e8e8e;font-weight:400">20:00</div><div class="t" style="left:172.5px;top:356.5px;font-size:13.5px;color:#8e8e8e;font-weight:400">0/0</div><div class="t" style="left:222.5px;top:356.5px;font-size:13.5px;color:#8e8e8e;font-weight:400">Ισπανική γλώσσα</div><div style="left:0px;top:374px;width:33px;height:34px;background:#d8f0fe"></div><div style="left:33px;top:374px;width:341px;height:34px;background:#0080c6"></div><svg style="left:6.5px;top:381.5px" width="19.0" height="19.0"><circle cx="9.5" cy="9.5" r="7.5" fill="none" stroke="#444" stroke-width="1.4"/><path d="M6.0 6.0 L12.5 12.5 M12.5 8.0 V12.5 H8.0" fill="none" stroke="#444" stroke-width="1.4"/></svg><div class="t" style="left:33px;top:376.5px;font-size:13px;color:#ffffff;letter-spacing:0.5px">24.08.2024</div><div class="t" style="left:222.5px;top:376.5px;font-size:13px;color:#ffffff">Σάββατο</div><div style="left:0px;top:408px;width:374px;height:40px;background:#ddfae3"></div><svg style="left:73px;top:421px" width="20" height="14"><rect x="0" y="0" width="20" height="14" fill="#eef0fc"/><path d="M1 2 L7 6 H1 z M19 2 L13 6 H19 z M1 12 L7 8 H1 z M19 12 L13 8 H19 z" fill="#a8b8f4"/><path d="M1 1 L19 13 M19 1 L1 13" stroke="#f47a8a" stroke-width="1.6"/><path d="M10 1 V13" stroke="#ff2a2a" stroke-width="2.6"/><path d="M1 7 H19" stroke="#ff3a3a" stroke-width="2.2"/><circle cx="10" cy="7" r="2.4" fill="#ff1a1a"/><path d="M0 0.6 H20 M0 13.4 H20" stroke="#e87080" stroke-width="1.2"/><rect x="0.6" y="0.6" width="18.8" height="12.8" fill="none" stroke="#5a6ad8" stroke-width="1.2" stroke-dasharray="3 2"/><path d="M0.6 0.6 V13.4 M19.4 0.6 V13.4" stroke="#4a5ac8" stroke-width="1.2"/></svg><div class="t" style="left:123.5px;top:410.5px;font-size:13.5px;color:#8e8e8e;font-weight:400">10:00</div><div class="t" style="left:172.5px;top:410.5px;font-size:13.5px;color:#8e8e8e;font-weight:400">0/0</div><div class="t" style="left:222.5px;top:410.5px;font-size:13.5px;color:#8e8e8e;font-weight:400">αγγλική γλώσσα</div><div class="t" style="left:222.5px;top:426.5px;font-size:13.5px;color:#8e8e8e;font-weight:400">Ομάδα: Children</div><div style="left:0px;top:448px;width:374px;height:40px;background:#d8f0fe"></div><svg style="left:73px;top:461px" width="20" height="14"><rect x="0" y="0" width="20" height="14" fill="#eef0fc"/><path d="M1 2 L7 6 H1 z M19 2 L13 6 H19 z M1 12 L7 8 H1 z M19 12 L13 8 H19 z" fill="#a8b8f4"/><path d="M1 1 L19 13 M19 1 L1 13" stroke="#f47a8a" stroke-width="1.6"/><path d="M10 1 V13" stroke="#ff2a2a" stroke-width="2.6"/><path d="M1 7 H19" stroke="#ff3a3a" stroke-width="2.2"/><circle cx="10" cy="7" r="2.4" fill="#ff1a1a"/><path d="M0 0.6 H20 M0 13.4 H20" stroke="#e87080" stroke-width="1.2"/><rect x="0.6" y="0.6" width="18.8" height="12.8" fill="none" stroke="#5a6ad8" stroke-width="1.2" stroke-dasharray="3 2"/><path d="M0.6 0.6 V13.4 M19.4 0.6 V13.4" stroke="#4a5ac8" stroke-width="1.2"/></svg><div class="t" style="left:123.5px;top:450.5px;font-size:13.5px;color:#8e8e8e;font-weight:400">11:00</div><div class="t" style="left:172.5px;top:450.5px;font-size:13.5px;color:#8e8e8e;font-weight:400">0/0</div><div class="t" style="left:222.5px;top:450.5px;font-size:13.5px;color:#8e8e8e;font-weight:400">αγγλική γλώσσα</div><div class="t" style="left:222.5px;top:466.5px;font-size:13.5px;color:#8e8e8e;font-weight:400">Ομάδα: Children</div><div style="left:0px;top:488px;width:374px;height:40px;background:#ddfae3"></div><svg style="left:73px;top:501px" width="20" height="14"><rect x="0" y="0" width="20" height="14" fill="#eef0fc"/><path d="M1 2 L7 6 H1 z M19 2 L13 6 H19 z M1 12 L7 8 H1 z M19 12 L13 8 H19 z" fill="#a8b8f4"/><path d="M1 1 L19 13 M19 1 L1 13" stroke="#f47a8a" stroke-width="1.6"/><path d="M10 1 V13" stroke="#ff2a2a" stroke-width="2.6"/><path d="M1 7 H19" stroke="#ff3a3a" stroke-width="2.2"/><circle cx="10" cy="7" r="2.4" fill="#ff1a1a"/><path d="M0 0.6 H20 M0 13.4 H20" stroke="#e87080" stroke-width="1.2"/><rect x="0.6" y="0.6" width="18.8" height="12.8" fill="none" stroke="#5a6ad8" stroke-width="1.2" stroke-dasharray="3 2"/><path d="M0.6 0.6 V13.4 M19.4 0.6 V13.4" stroke="#4a5ac8" stroke-width="1.2"/></svg><div class="t" style="left:123.5px;top:490.5px;font-size:13.5px;color:#8e8e8e;font-weight:400">12:00</div><div class="t" style="left:172.5px;top:490.5px;font-size:13.5px;color:#8e8e8e;font-weight:400">0/0</div><div class="t" style="left:222.5px;top:490.5px;font-size:13.5px;color:#8e8e8e;font-weight:400">αγγλική γλώσσα</div><div class="t" style="left:222.5px;top:506.5px;font-size:13.5px;color:#8e8e8e;font-weight:400">Ομάδα: Children</div><div style="left:0px;top:528px;width:374px;height:40px;background:#d8f0fe"></div><svg style="left:73px;top:541px" width="20" height="14"><rect x="0" y="0" width="20" height="14" fill="#eef0fc"/><path d="M1 2 L7 6 H1 z M19 2 L13 6 H19 z M1 12 L7 8 H1 z M19 12 L13 8 H19 z" fill="#a8b8f4"/><path d="M1 1 L19 13 M19 1 L1 13" stroke="#f47a8a" stroke-width="1.6"/><path d="M10 1 V13" stroke="#ff2a2a" stroke-width="2.6"/><path d="M1 7 H19" stroke="#ff3a3a" stroke-width="2.2"/><circle cx="10" cy="7" r="2.4" fill="#ff1a1a"/><path d="M0 0.6 H20 M0 13.4 H20" stroke="#e87080" stroke-width="1.2"/><rect x="0.6" y="0.6" width="18.8" height="12.8" fill="none" stroke="#5a6ad8" stroke-width="1.2" stroke-dasharray="3 2"/><path d="M0.6 0.6 V13.4 M19.4 0.6 V13.4" stroke="#4a5ac8" stroke-width="1.2"/></svg><div class="t" style="left:123.5px;top:530.5px;font-size:13.5px;color:#8e8e8e;font-weight:400">13:00</div><div class="t" style="left:172.5px;top:530.5px;font-size:13.5px;color:#8e8e8e;font-weight:400">0/0</div><div class="t" style="left:222.5px;top:530.5px;font-size:13.5px;color:#8e8e8e;font-weight:400">αγγλική γλώσσα</div><div class="t" style="left:222.5px;top:546.5px;font-size:13.5px;color:#8e8e8e;font-weight:400">Ομάδα: Children</div><div style="left:0px;top:568px;width:374px;height:40px;background:#ddfae3"></div><div style="left:123px;top:568px;width:251px;height:40px;background:#ffffb9"></div><svg style="left:73px;top:581px" width="20" height="14"><rect x="0" y="0" width="20" height="14" fill="#eef0fc"/><path d="M1 2 L7 6 H1 z M19 2 L13 6 H19 z M1 12 L7 8 H1 z M19 12 L13 8 H19 z" fill="#a8b8f4"/><path d="M1 1 L19 13 M19 1 L1 13" stroke="#f47a8a" stroke-width="1.6"/><path d="M10 1 V13" stroke="#ff2a2a" stroke-width="2.6"/><path d="M1 7 H19" stroke="#ff3a3a" stroke-width="2.2"/><circle cx="10" cy="7" r="2.4" fill="#ff1a1a"/><path d="M0 0.6 H20 M0 13.4 H20" stroke="#e87080" stroke-width="1.2"/><rect x="0.6" y="0.6" width="18.8" height="12.8" fill="none" stroke="#5a6ad8" stroke-width="1.2" stroke-dasharray="3 2"/><path d="M0.6 0.6 V13.4 M19.4 0.6 V13.4" stroke="#4a5ac8" stroke-width="1.2"/></svg><div class="t" style="left:123.5px;top:570.5px;font-size:13.5px;color:#000;font-weight:400;-webkit-text-stroke:0.15px #000">14:00</div><div class="t" style="left:172.5px;top:570.5px;font-size:13.5px;color:#000;font-weight:400;-webkit-text-stroke:0.15px #000">0/1</div><div class="t" style="left:222.5px;top:570.5px;font-size:13.5px;color:#000;font-weight:400;-webkit-text-stroke:0.15px #000">αγγλική γλώσσα</div><div class="t" style="left:222.5px;top:586.5px;font-size:13.5px;color:#000;font-weight:400;-webkit-text-stroke:0.15px #000">Ομάδα: Children</div><div style="left:0px;top:608px;width:374px;height:40px;background:#d8f0fe"></div><svg style="left:73px;top:621px" width="20" height="14"><rect x="0" y="0" width="20" height="14" fill="#eef0fc"/><path d="M1 2 L7 6 H1 z M19 2 L13 6 H19 z M1 12 L7 8 H1 z M19 12 L13 8 H19 z" fill="#a8b8f4"/><path d="M1 1 L19 13 M19 1 L1 13" stroke="#f47a8a" stroke-width="1.6"/><path d="M10 1 V13" stroke="#ff2a2a" stroke-width="2.6"/><path d="M1 7 H19" stroke="#ff3a3a" stroke-width="2.2"/><circle cx="10" cy="7" r="2.4" fill="#ff1a1a"/><path d="M0 0.6 H20 M0 13.4 H20" stroke="#e87080" stroke-width="1.2"/><rect x="0.6" y="0.6" width="18.8" height="12.8" fill="none" stroke="#5a6ad8" stroke-width="1.2" stroke-dasharray="3 2"/><path d="M0.6 0.6 V13.4 M19.4 0.6 V13.4" stroke="#4a5ac8" stroke-width="1.2"/></svg><div class="t" style="left:123.5px;top:610.5px;font-size:13.5px;color:#8e8e8e;font-weight:400">15:00</div><div class="t" style="left:172.5px;top:610.5px;font-size:13.5px;color:#8e8e8e;font-weight:400">0/0</div><div class="t" style="left:222.5px;top:610.5px;font-size:13.5px;color:#8e8e8e;font-weight:400">αγγλική γλώσσα</div><div class="t" style="left:222.5px;top:626.5px;font-size:13.5px;color:#8e8e8e;font-weight:400">Ομάδα: Children</div></div><div style="left:400px;top:233px;width:1px;height:638px;background:#c4c4c4"></div><div style="left:774px;top:233px;width:1px;height:639px;background:#c4c4c4"></div><div style="left:400px;top:871px;width:375px;height:1px;background:#b8b8b8"></div><svg style="left:781px;top:175px" width="10" height="6"><path d="M0 4 L4 0 L8 4 z" fill="#777"/></svg><div style="left:780px;top:188px;width:10px;height:564px;background:#b8b8b8"></div><svg style="left:781px;top:858px" width="10" height="6"><path d="M0 0 L4 4 L8 0 z" fill="#777"/></svg><svg style="left:409px;top:879px" width="6" height="10"><path d="M4.5 0 L0.5 3.5 L4.5 7 z" fill="#777"/></svg><div style="left:422px;top:878px;width:300px;height:9px;background:#b8b8b8"></div><svg style="left:761px;top:879px" width="6" height="10"><path d="M0.5 0 L4.5 3.5 L0.5 7 z" fill="#777"/></svg>
<div style="left:804px;top:165px;width:397px;height:728px;background:#fff;border:1px solid #c4c4c4;border-left:2px solid #bcbcbc;border-top:2px solid #bcbcbc"></div><div style="left:805px;top:166px;width:375px;height:34px;background:#f5f5f5;border:1px solid #c4c4c4;border-right:1px solid #c4c4c4"></div><div class="t" style="left:805px;top:177px;width:412px;text-align:center;font-size:13.3px;color:#333">2. Μουσική και χοροί</div><div style="left:805px;top:199px;width:375px;height:35px;background:#f5f5f5;border:1px solid #c4c4c4;border-top:1px solid #c8c8c8"></div><div style="left:928px;top:200px;width:1px;height:33px;background:#d0d0d0"></div><div style="left:978px;top:200px;width:1px;height:33px;background:#d0d0d0"></div><div style="left:1028px;top:200px;width:1px;height:33px;background:#d0d0d0"></div><div class="t" style="left:818px;top:211px;font-size:13px;color:#333">Ημερομηνία</div><svg style="left:906.5px;top:215.5px" width="12" height="7"><path d="M0 5.5 L5.5 0 L11 5.5 z" fill="#555"/></svg><div class="t" style="left:934px;top:211px;font-size:13px;color:#333">χρό<span style='letter-spacing:2px'>...</span></div><div class="t" style="left:982px;top:211px;font-size:13px;color:#333">Ανθ<span style='letter-spacing:2px'>...</span></div><div class="t" style="left:1028px;top:211px;width:186px;text-align:center;font-size:13px;color:#333">Ρεκόρ</div><div style="left:806px;top:233px;width:374px;height:638px;overflow:hidden"><div style="left:0px;top:0px;width:33px;height:34px;background:#d8f0fe"></div><div style="left:33px;top:0px;width:341px;height:34px;background:#0080c6"></div><svg style="left:6.5px;top:7.5px" width="19.0" height="19.0"><circle cx="9.5" cy="9.5" r="7.5" fill="none" stroke="#444" stroke-width="1.4"/><path d="M6.0 6.0 L12.5 12.5 M12.5 8.0 V12.5 H8.0" fill="none" stroke="#444" stroke-width="1.4"/></svg><div class="t" style="left:33px;top:2.5px;font-size:13px;color:#00e8ff;letter-spacing:0.5px">23.08.2024</div><div class="t" style="left:222.5px;top:2.5px;font-size:13px;color:#00e8ff">Παρασκευή</div><div style="left:0px;top:34px;width:374px;height:20px;background:#ddfae3"></div><svg style="left:73px;top:34px" width="22" height="22"><defs><linearGradient id="micg" x1="0" y1="0" x2="1" y2="1"><stop offset="0" stop-color="#f8f8fc"/><stop offset="1" stop-color="#a8a8bc"/></linearGradient></defs><path d="M14 3.5 C11.5 6.5 12.5 9.5 16 12.5 C19.5 16 17.5 19 15 19.2" fill="none" stroke="#7a6a5c" stroke-width="1.4"/><path d="M7.5 8.5 L14 18.5" stroke="#a4a6b8" stroke-width="4.4" stroke-linecap="round"/><path d="M7 8 L13 17.5" stroke="#d8d8e0" stroke-width="1.2" stroke-linecap="round"/><ellipse cx="5.6" cy="5.8" rx="3.6" ry="4.4" transform="rotate(-35 5.6 5.8)" fill="url(#micg)" stroke="#c8c8d4" stroke-width="0.7"/></svg><div class="t" style="left:123.5px;top:36.5px;font-size:13.5px;color:#8e8e8e;font-weight:400">10:00</div><div class="t" style="left:172.5px;top:36.5px;font-size:13.5px;color:#8e8e8e;font-weight:400">0/0</div><div class="t" style="left:222.5px;top:36.5px;font-size:13.5px;color:#8e8e8e;font-weight:400">Μαθήματα τραγουδιού</div><div style="left:0px;top:54px;width:374px;height:20px;background:#d8f0fe"></div><svg style="left:73px;top:54px" width="22" height="22"><defs><linearGradient id="micg" x1="0" y1="0" x2="1" y2="1"><stop offset="0" stop-color="#f8f8fc"/><stop offset="1" stop-color="#a8a8bc"/></linearGradient></defs><path d="M14 3.5 C11.5 6.5 12.5 9.5 16 12.5 C19.5 16 17.5 19 15 19.2" fill="none" stroke="#7a6a5c" stroke-width="1.4"/><path d="M7.5 8.5 L14 18.5" stroke="#a4a6b8" stroke-width="4.4" stroke-linecap="round"/><path d="M7 8 L13 17.5" stroke="#d8d8e0" stroke-width="1.2" stroke-linecap="round"/><ellipse cx="5.6" cy="5.8" rx="3.6" ry="4.4" transform="rotate(-35 5.6 5.8)" fill="url(#micg)" stroke="#c8c8d4" stroke-width="0.7"/></svg><div class="t" style="left:123.5px;top:56.5px;font-size:13.5px;color:#8e8e8e;font-weight:400">11:00</div><div class="t" style="left:172.5px;top:56.5px;font-size:13.5px;color:#8e8e8e;font-weight:400">0/0</div><div class="t" style="left:222.5px;top:56.5px;font-size:13.5px;color:#8e8e8e;font-weight:400">Μαθήματα τραγουδιού</div><div style="left:0px;top:74px;width:374px;height:20px;background:#ddfae3"></div><svg style="left:73px;top:74px" width="22" height="22"><defs><linearGradient id="micg" x1="0" y1="0" x2="1" y2="1"><stop offset="0" stop-color="#f8f8fc"/><stop offset="1" stop-color="#a8a8bc"/></linearGradient></defs><path d="M14 3.5 C11.5 6.5 12.5 9.5 16 12.5 C19.5 16 17.5 19 15 19.2" fill="none" stroke="#7a6a5c" stroke-width="1.4"/><path d="M7.5 8.5 L14 18.5" stroke="#a4a6b8" stroke-width="4.4" stroke-linecap="round"/><path d="M7 8 L13 17.5" stroke="#d8d8e0" stroke-width="1.2" stroke-linecap="round"/><ellipse cx="5.6" cy="5.8" rx="3.6" ry="4.4" transform="rotate(-35 5.6 5.8)" fill="url(#micg)" stroke="#c8c8d4" stroke-width="0.7"/></svg><div class="t" style="left:123.5px;top:76.5px;font-size:13.5px;color:#8e8e8e;font-weight:400">12:00</div><div class="t" style="left:172.5px;top:76.5px;font-size:13.5px;color:#8e8e8e;font-weight:400">0/0</div><div class="t" style="left:222.5px;top:76.5px;font-size:13.5px;color:#8e8e8e;font-weight:400">Μαθήματα τραγουδιού</div><div style="left:0px;top:94px;width:374px;height:20px;background:#d8f0fe"></div><svg style="left:73px;top:94px" width="22" height="22"><defs><linearGradient id="micg" x1="0" y1="0" x2="1" y2="1"><stop offset="0" stop-color="#f8f8fc"/><stop offset="1" stop-color="#a8a8bc"/></linearGradient></defs><path d="M14 3.5 C11.5 6.5 12.5 9.5 16 12.5 C19.5 16 17.5 19 15 19.2" fill="none" stroke="#7a6a5c" stroke-width="1.4"/><path d="M7.5 8.5 L14 18.5" stroke="#a4a6b8" stroke-width="4.4" stroke-linecap="round"/><path d="M7 8 L13 17.5" stroke="#d8d8e0" stroke-width="1.2" stroke-linecap="round"/><ellipse cx="5.6" cy="5.8" rx="3.6" ry="4.4" transform="rotate(-35 5.6 5.8)" fill="url(#micg)" stroke="#c8c8d4" stroke-width="0.7"/></svg><div class="t" style="left:123.5px;top:96.5px;font-size:13.5px;color:#8e8e8e;font-weight:400">13:00</div><div class="t" style="left:172.5px;top:96.5px;font-size:13.5px;color:#8e8e8e;font-weight:400">0/0</div><div class="t" style="left:222.5px;top:96.5px;font-size:13.5px;color:#8e8e8e;font-weight:400">Μαθήματα τραγουδιού</div><div style="left:0px;top:114px;width:374px;height:60px;background:#ddfae3"></div><div style="left:123px;top:114px;width:251px;height:60px;background:#ffffb9"></div><svg style="left:73px;top:134px" width="22" height="22"><path d="M10.5 10.5 L16.5 4.5" stroke="#333" stroke-width="1.4"/><path d="M15.2 3.5 l1.8 -2 l2.5 2 l-1.2 2.5 l-2.2 -0.2 z" fill="#222"/><g fill="#12aef0" stroke="#0a2a50" stroke-width="1.3"><circle cx="5.8" cy="15.2" r="4.6"/><circle cx="9.6" cy="11.4" r="3.4"/></g><path d="M6.5 14.5 l3.2 -3.2" stroke="#12aef0" stroke-width="3.5"/><circle cx="8" cy="13" r="1.1" fill="#fff" stroke="#0a2a50" stroke-width="0.7"/><path d="M3.5 15.5 l2.5 2.5" stroke="#0a2a50" stroke-width="1"/></svg><div class="t" style="left:123.5px;top:116.5px;font-size:13.5px;color:#000;font-weight:400;-webkit-text-stroke:0.15px #000">14:00</div><div class="t" style="left:172.5px;top:116.5px;font-size:13.5px;color:#000;font-weight:400;-webkit-text-stroke:0.15px #000">0/1</div><div class="t" style="left:222.5px;top:116.5px;font-size:13.5px;color:#000;font-weight:400;-webkit-text-stroke:0.15px #000">Μαθήματα μουσικής</div><div class="t" style="left:222.5px;top:132.5px;font-size:13.5px;color:#000;font-weight:400;-webkit-text-stroke:0.15px #000">Υπάλληλος 4</div><div class="t" style="left:222.5px;top:148.5px;font-size:13.5px;color:#000;font-weight:400;-webkit-text-stroke:0.15px #000">Ομάδα: Beginners</div><div style="left:0px;top:174px;width:374px;height:60px;background:#d8f0fe"></div><svg style="left:73px;top:194px" width="22" height="22"><path d="M10.5 10.5 L16.5 4.5" stroke="#333" stroke-width="1.4"/><path d="M15.2 3.5 l1.8 -2 l2.5 2 l-1.2 2.5 l-2.2 -0.2 z" fill="#222"/><g fill="#12aef0" stroke="#0a2a50" stroke-width="1.3"><circle cx="5.8" cy="15.2" r="4.6"/><circle cx="9.6" cy="11.4" r="3.4"/></g><path d="M6.5 14.5 l3.2 -3.2" stroke="#12aef0" stroke-width="3.5"/><circle cx="8" cy="13" r="1.1" fill="#fff" stroke="#0a2a50" stroke-width="0.7"/><path d="M3.5 15.5 l2.5 2.5" stroke="#0a2a50" stroke-width="1"/></svg><div class="t" style="left:123.5px;top:176.5px;font-size:13.5px;color:#8e8e8e;font-weight:400">15:00</div><div class="t" style="left:172.5px;top:176.5px;font-size:13.5px;color:#8e8e8e;font-weight:400">0/0</div><div class="t" style="left:222.5px;top:176.5px;font-size:13.5px;color:#8e8e8e;font-weight:400">Μαθήματα μουσικής</div><div class="t" style="left:222.5px;top:192.5px;font-size:13.5px;color:#8e8e8e;font-weight:400">Υπάλληλος 4</div><div class="t" style="left:222.5px;top:208.5px;font-size:13.5px;color:#8e8e8e;font-weight:400">Ομάδα: Beginners</div><div style="left:0px;top:234px;width:374px;height:60px;background:#ddfae3"></div><svg style="left:73px;top:254px" width="22" height="22"><path d="M10.5 10.5 L16.5 4.5" stroke="#333" stroke-width="1.4"/><path d="M15.2 3.5 l1.8 -2 l2.5 2 l-1.2 2.5 l-2.2 -0.2 z" fill="#222"/><g fill="#12aef0" stroke="#0a2a50" stroke-width="1.3"><circle cx="5.8" cy="15.2" r="4.6"/><circle cx="9.6" cy="11.4" r="3.4"/></g><path d="M6.5 14.5 l3.2 -3.2" stroke="#12aef0" stroke-width="3.5"/><circle cx="8" cy="13" r="1.1" fill="#fff" stroke="#0a2a50" stroke-width="0.7"/><path d="M3.5 15.5 l2.5 2.5" stroke="#0a2a50" stroke-width="1"/></svg><div class="t" style="left:123.5px;top:236.5px;font-size:13.5px;color:#8e8e8e;font-weight:400">16:00</div><div class="t" style="left:172.5px;top:236.5px;font-size:13.5px;color:#8e8e8e;font-weight:400">0/0</div><div class="t" style="left:222.5px;top:236.5px;font-size:13.5px;color:#8e8e8e;font-weight:400">Μαθήματα μουσικής</div><div class="t" style="left:222.5px;top:252.5px;font-size:13.5px;color:#8e8e8e;font-weight:400">Υπάλληλος 4</div><div class="t" style="left:222.5px;top:268.5px;font-size:13.5px;color:#8e8e8e;font-weight:400">Ομάδα: Beginners</div><div style="left:0px;top:294px;width:374px;height:60px;background:#d8f0fe"></div><svg style="left:73px;top:314px" width="22" height="22"><path d="M10.5 10.5 L16.5 4.5" stroke="#333" stroke-width="1.4"/><path d="M15.2 3.5 l1.8 -2 l2.5 2 l-1.2 2.5 l-2.2 -0.2 z" fill="#222"/><g fill="#12aef0" stroke="#0a2a50" stroke-width="1.3"><circle cx="5.8" cy="15.2" r="4.6"/><circle cx="9.6" cy="11.4" r="3.4"/></g><path d="M6.5 14.5 l3.2 -3.2" stroke="#12aef0" stroke-width="3.5"/><circle cx="8" cy="13" r="1.1" fill="#fff" stroke="#0a2a50" stroke-width="0.7"/><path d="M3.5 15.5 l2.5 2.5" stroke="#0a2a50" stroke-width="1"/></svg><div class="t" style="left:123.5px;top:296.5px;font-size:13.5px;color:#8e8e8e;font-weight:400">17:00</div><div class="t" style="left:172.5px;top:296.5px;font-size:13.5px;color:#8e8e8e;font-weight:400">0/0</div><div class="t" style="left:222.5px;top:296.5px;font-size:13.5px;color:#8e8e8e;font-weight:400">Μαθήματα μουσικής</div><div class="t" style="left:222.5px;top:312.5px;font-size:13.5px;color:#8e8e8e;font-weight:400">Υπάλληλος 4</div><div class="t" style="left:222.5px;top:328.5px;font-size:13.5px;color:#8e8e8e;font-weight:400">Ομάδα: Beginners</div><div style="left:0px;top:354px;width:374px;height:20px;background:#ddfae3"></div><div style="left:123px;top:354px;width:251px;height:20px;background:#ffffb9"></div><svg style="left:73px;top:355px" width="22" height="20"><g stroke-linecap="round" fill="none"><path d="M4 12 l-0.5 5 M6 12 l1 5" stroke="#2a3a5a" stroke-width="1.8"/><path d="M5 6 v6" stroke="#2aa080" stroke-width="3.2"/><path d="M5 7 l5 -5.5 M4.5 8 l-2 3.5" stroke="#2aa080" stroke-width="1.5"/><circle cx="5.2" cy="3.2" r="1.7" fill="#f0c8a0" stroke="none"/><path d="M14 12 l-1 5 M16 12 l1 5" stroke="#2a3a5a" stroke-width="1.8"/><path d="M15 6 v6" stroke="#e04a30" stroke-width="3.2"/><path d="M14.5 6.5 l-3.5 -5 M15.5 6.5 l3.5 -5" stroke="#e06a50" stroke-width="1.5"/><circle cx="15" cy="3.2" r="1.7" fill="#f0c8a0" stroke="none"/></g></svg><div class="t" style="left:123.5px;top:356.5px;font-size:13.5px;color:#c8141e;font-weight:400">18:00</div><div class="t" style="left:172.5px;top:356.5px;font-size:13.5px;color:#c8141e;font-weight:400">0/2</div><div class="t" style="left:222.5px;top:356.5px;font-size:13.5px;color:#c8141e;font-weight:400">Χιπ χοπ χορούς</div><div style="left:0px;top:374px;width:374px;height:20px;background:#d8f0fe"></div><svg style="left:73px;top:375px" width="22" height="20"><g stroke-linecap="round" fill="none"><path d="M4 12 l-0.5 5 M6 12 l1 5" stroke="#2a3a5a" stroke-width="1.8"/><path d="M5 6 v6" stroke="#2aa080" stroke-width="3.2"/><path d="M5 7 l5 -5.5 M4.5 8 l-2 3.5" stroke="#2aa080" stroke-width="1.5"/><circle cx="5.2" cy="3.2" r="1.7" fill="#f0c8a0" stroke="none"/><path d="M14 12 l-1 5 M16 12 l1 5" stroke="#2a3a5a" stroke-width="1.8"/><path d="M15 6 v6" stroke="#e04a30" stroke-width="3.2"/><path d="M14.5 6.5 l-3.5 -5 M15.5 6.5 l3.5 -5" stroke="#e06a50" stroke-width="1.5"/><circle cx="15" cy="3.2" r="1.7" fill="#f0c8a0" stroke="none"/></g></svg><div class="t" style="left:123.5px;top:376.5px;font-size:13.5px;color:#8e8e8e;font-weight:400">19:00</div><div class="t" style="left:172.5px;top:376.5px;font-size:13.5px;color:#8e8e8e;font-weight:400">0/0</div><div class="t" style="left:222.5px;top:376.5px;font-size:13.5px;color:#8e8e8e;font-weight:400">Χιπ χοπ χορούς</div><div style="left:0px;top:394px;width:374px;height:20px;background:#ddfae3"></div><svg style="left:73px;top:395px" width="22" height="20"><g stroke-linecap="round" fill="none"><path d="M4 12 l-0.5 5 M6 12 l1 5" stroke="#2a3a5a" stroke-width="1.8"/><path d="M5 6 v6" stroke="#2aa080" stroke-width="3.2"/><path d="M5 7 l5 -5.5 M4.5 8 l-2 3.5" stroke="#2aa080" stroke-width="1.5"/><circle cx="5.2" cy="3.2" r="1.7" fill="#f0c8a0" stroke="none"/><path d="M14 12 l-1 5 M16 12 l1 5" stroke="#2a3a5a" stroke-width="1.8"/><path d="M15 6 v6" stroke="#e04a30" stroke-width="3.2"/><path d="M14.5 6.5 l-3.5 -5 M15.5 6.5 l3.5 -5" stroke="#e06a50" stroke-width="1.5"/><circle cx="15" cy="3.2" r="1.7" fill="#f0c8a0" stroke="none"/></g></svg><div class="t" style="left:123.5px;top:396.5px;font-size:13.5px;color:#8e8e8e;font-weight:400">20:00</div><div class="t" style="left:172.5px;top:396.5px;font-size:13.5px;color:#8e8e8e;font-weight:400">0/0</div><div class="t" style="left:222.5px;top:396.5px;font-size:13.5px;color:#8e8e8e;font-weight:400">Χιπ χοπ χορούς</div><div style="left:0px;top:414px;width:33px;height:34px;background:#d8f0fe"></div><div style="left:33px;top:414px;width:341px;height:34px;background:#0080c6"></div><svg style="left:6.5px;top:421.5px" width="19.0" height="19.0"><circle cx="9.5" cy="9.5" r="7.5" fill="none" stroke="#444" stroke-width="1.4"/><path d="M6.0 6.0 L12.5 12.5 M12.5 8.0 V12.5 H8.0" fill="none" stroke="#444" stroke-width="1.4"/></svg><div class="t" style="left:33px;top:416.5px;font-size:13px;color:#ffffff;letter-spacing:0.5px">24.08.2024</div><div class="t" style="left:222.5px;top:416.5px;font-size:13px;color:#ffffff">Σάββατο</div><div style="left:0px;top:448px;width:374px;height:20px;background:#ddfae3"></div><svg style="left:73px;top:448px" width="22" height="22"><defs><linearGradient id="micg" x1="0" y1="0" x2="1" y2="1"><stop offset="0" stop-color="#f8f8fc"/><stop offset="1" stop-color="#a8a8bc"/></linearGradient></defs><path d="M14 3.5 C11.5 6.5 12.5 9.5 16 12.5 C19.5 16 17.5 19 15 19.2" fill="none" stroke="#7a6a5c" stroke-width="1.4"/><path d="M7.5 8.5 L14 18.5" stroke="#a4a6b8" stroke-width="4.4" stroke-linecap="round"/><path d="M7 8 L13 17.5" stroke="#d8d8e0" stroke-width="1.2" stroke-linecap="round"/><ellipse cx="5.6" cy="5.8" rx="3.6" ry="4.4" transform="rotate(-35 5.6 5.8)" fill="url(#micg)" stroke="#c8c8d4" stroke-width="0.7"/></svg><div class="t" style="left:123.5px;top:450.5px;font-size:13.5px;color:#8e8e8e;font-weight:400">10:00</div><div class="t" style="left:172.5px;top:450.5px;font-size:13.5px;color:#8e8e8e;font-weight:400">0/0</div><div class="t" style="left:222.5px;top:450.5px;font-size:13.5px;color:#8e8e8e;font-weight:400">Μαθήματα τραγουδιού</div><div style="left:0px;top:468px;width:374px;height:20px;background:#d8f0fe"></div><svg style="left:73px;top:468px" width="22" height="22"><defs><linearGradient id="micg" x1="0" y1="0" x2="1" y2="1"><stop offset="0" stop-color="#f8f8fc"/><stop offset="1" stop-color="#a8a8bc"/></linearGradient></defs><path d="M14 3.5 C11.5 6.5 12.5 9.5 16 12.5 C19.5 16 17.5 19 15 19.2" fill="none" stroke="#7a6a5c" stroke-width="1.4"/><path d="M7.5 8.5 L14 18.5" stroke="#a4a6b8" stroke-width="4.4" stroke-linecap="round"/><path d="M7 8 L13 17.5" stroke="#d8d8e0" stroke-width="1.2" stroke-linecap="round"/><ellipse cx="5.6" cy="5.8" rx="3.6" ry="4.4" transform="rotate(-35 5.6 5.8)" fill="url(#micg)" stroke="#c8c8d4" stroke-width="0.7"/></svg><div class="t" style="left:123.5px;top:470.5px;font-size:13.5px;color:#8e8e8e;font-weight:400">11:00</div><div class="t" style="left:172.5px;top:470.5px;font-size:13.5px;color:#8e8e8e;font-weight:400">0/0</div><div class="t" style="left:222.5px;top:470.5px;font-size:13.5px;color:#8e8e8e;font-weight:400">Μαθήματα τραγουδιού</div><div style="left:0px;top:488px;width:374px;height:20px;background:#ddfae3"></div><svg style="left:73px;top:488px" width="22" height="22"><defs><linearGradient id="micg" x1="0" y1="0" x2="1" y2="1"><stop offset="0" stop-color="#f8f8fc"/><stop offset="1" stop-color="#a8a8bc"/></linearGradient></defs><path d="M14 3.5 C11.5 6.5 12.5 9.5 16 12.5 C19.5 16 17.5 19 15 19.2" fill="none" stroke="#7a6a5c" stroke-width="1.4"/><path d="M7.5 8.5 L14 18.5" stroke="#a4a6b8" stroke-width="4.4" stroke-linecap="round"/><path d="M7 8 L13 17.5" stroke="#d8d8e0" stroke-width="1.2" stroke-linecap="round"/><ellipse cx="5.6" cy="5.8" rx="3.6" ry="4.4" transform="rotate(-35 5.6 5.8)" fill="url(#micg)" stroke="#c8c8d4" stroke-width="0.7"/></svg><div class="t" style="left:123.5px;top:490.5px;font-size:13.5px;color:#8e8e8e;font-weight:400">12:00</div><div class="t" style="left:172.5px;top:490.5px;font-size:13.5px;color:#8e8e8e;font-weight:400">0/0</div><div class="t" style="left:222.5px;top:490.5px;font-size:13.5px;color:#8e8e8e;font-weight:400">Μαθήματα τραγουδιού</div><div style="left:0px;top:508px;width:374px;height:20px;background:#d8f0fe"></div><div style="left:123px;top:508px;width:251px;height:20px;background:#ffffb9"></div><svg style="left:73px;top:508px" width="22" height="22"><defs><linearGradient id="micg" x1="0" y1="0" x2="1" y2="1"><stop offset="0" stop-color="#f8f8fc"/><stop offset="1" stop-color="#a8a8bc"/></linearGradient></defs><path d="M14 3.5 C11.5 6.5 12.5 9.5 16 12.5 C19.5 16 17.5 19 15 19.2" fill="none" stroke="#7a6a5c" stroke-width="1.4"/><path d="M7.5 8.5 L14 18.5" stroke="#a4a6b8" stroke-width="4.4" stroke-linecap="round"/><path d="M7 8 L13 17.5" stroke="#d8d8e0" stroke-width="1.2" stroke-linecap="round"/><ellipse cx="5.6" cy="5.8" rx="3.6" ry="4.4" transform="rotate(-35 5.6 5.8)" fill="url(#micg)" stroke="#c8c8d4" stroke-width="0.7"/></svg><div class="t" style="left:123.5px;top:510.5px;font-size:13.5px;color:#000;font-weight:400;-webkit-text-stroke:0.15px #000">13:00</div><div class="t" style="left:172.5px;top:510.5px;font-size:13.5px;color:#000;font-weight:400;-webkit-text-stroke:0.15px #000">0/1</div><div class="t" style="left:222.5px;top:510.5px;font-size:13.5px;color:#000;font-weight:400;-webkit-text-stroke:0.15px #000">Μαθήματα τραγουδιού</div><div style="left:0px;top:528px;width:374px;height:60px;background:#ddfae3"></div><svg style="left:73px;top:548px" width="22" height="22"><path d="M10.5 10.5 L16.5 4.5" stroke="#333" stroke-width="1.4"/><path d="M15.2 3.5 l1.8 -2 l2.5 2 l-1.2 2.5 l-2.2 -0.2 z" fill="#222"/><g fill="#12aef0" stroke="#0a2a50" stroke-width="1.3"><circle cx="5.8" cy="15.2" r="4.6"/><circle cx="9.6" cy="11.4" r="3.4"/></g><path d="M6.5 14.5 l3.2 -3.2" stroke="#12aef0" stroke-width="3.5"/><circle cx="8" cy="13" r="1.1" fill="#fff" stroke="#0a2a50" stroke-width="0.7"/><path d="M3.5 15.5 l2.5 2.5" stroke="#0a2a50" stroke-width="1"/></svg><div class="t" style="left:123.5px;top:530.5px;font-size:13.5px;color:#8e8e8e;font-weight:400">14:00</div><div class="t" style="left:172.5px;top:530.5px;font-size:13.5px;color:#8e8e8e;font-weight:400">0/0</div><div class="t" style="left:222.5px;top:530.5px;font-size:13.5px;color:#8e8e8e;font-weight:400">Μαθήματα μουσικής</div><div class="t" style="left:222.5px;top:546.5px;font-size:13.5px;color:#8e8e8e;font-weight:400">Υπάλληλος 4</div><div class="t" style="left:222.5px;top:562.5px;font-size:13.5px;color:#8e8e8e;font-weight:400">Ομάδα: Beginners</div><div style="left:0px;top:588px;width:374px;height:60px;background:#d8f0fe"></div><svg style="left:73px;top:608px" width="22" height="22"><path d="M10.5 10.5 L16.5 4.5" stroke="#333" stroke-width="1.4"/><path d="M15.2 3.5 l1.8 -2 l2.5 2 l-1.2 2.5 l-2.2 -0.2 z" fill="#222"/><g fill="#12aef0" stroke="#0a2a50" stroke-width="1.3"><circle cx="5.8" cy="15.2" r="4.6"/><circle cx="9.6" cy="11.4" r="3.4"/></g><path d="M6.5 14.5 l3.2 -3.2" stroke="#12aef0" stroke-width="3.5"/><circle cx="8" cy="13" r="1.1" fill="#fff" stroke="#0a2a50" stroke-width="0.7"/><path d="M3.5 15.5 l2.5 2.5" stroke="#0a2a50" stroke-width="1"/></svg><div class="t" style="left:123.5px;top:590.5px;font-size:13.5px;color:#8e8e8e;font-weight:400">15:00</div><div class="t" style="left:172.5px;top:590.5px;font-size:13.5px;color:#8e8e8e;font-weight:400">0/0</div><div class="t" style="left:222.5px;top:590.5px;font-size:13.5px;color:#8e8e8e;font-weight:400">Μαθήματα μουσικής</div><div class="t" style="left:222.5px;top:606.5px;font-size:13.5px;color:#8e8e8e;font-weight:400">Υπάλληλος 4</div><div class="t" style="left:222.5px;top:622.5px;font-size:13.5px;color:#8e8e8e;font-weight:400">Ομάδα: Beginners</div></div><div style="left:805px;top:233px;width:1px;height:638px;background:#c4c4c4"></div><div style="left:1179px;top:233px;width:1px;height:639px;background:#c4c4c4"></div><div style="left:805px;top:871px;width:375px;height:1px;background:#b8b8b8"></div><svg style="left:1186px;top:175px" width="10" height="6"><path d="M0 4 L4 0 L8 4 z" fill="#777"/></svg><div style="left:1185px;top:188px;width:10px;height:509px;background:#b8b8b8"></div><svg style="left:1186px;top:858px" width="10" height="6"><path d="M0 0 L4 4 L8 0 z" fill="#777"/></svg><svg style="left:814px;top:879px" width="6" height="10"><path d="M4.5 0 L0.5 3.5 L4.5 7 z" fill="#777"/></svg><div style="left:827px;top:878px;width:300px;height:9px;background:#b8b8b8"></div><svg style="left:1166px;top:879px" width="6" height="10"><path d="M0.5 0 L4.5 3.5 L0.5 7 z" fill="#777"/></svg>
<div style="left:23px;top:923px;width:1205px;height:1px;background:#e2e2e2"></div>
<div style="left:23px;top:924px;width:1205px;height:1px;background:#c4c4c4"></div>
<div style="left:188px;top:927px;width:1040px;height:1px;background:#c4c4c4"></div>
<div style="left:188px;top:928px;width:1040px;height:1px;background:#e4e4e4"></div>
<div style="left:1226px;top:924px;width:2px;height:4px;background:#c8c8c8;border-radius:0 2px 2px 0"></div>
<div style="left:23px;top:924px;width:166px;height:56px;background:#fff;border:1px solid #c8c8c8;border-bottom:none"></div>
<div style="left:23px;top:977px;width:166px;height:3px;background:#1ba1f0"></div>
<svg style="left:40px;top:940px" width="31" height="27"><rect x="0.5" y="0.5" width="29" height="25" rx="2" fill="#e8eef8" stroke="#7a90c0"/><rect x="1" y="1" width="28" height="6" fill="#8fb0e0"/><circle cx="25" cy="3.5" r="1.3" fill="#e04040"/></svg>
<div class="t" style="left:82px;top:945px;font-size:13.5px;color:#1e98e6">Εγγραφή</div>
<svg style="left:156px;top:947px" width="12" height="12"><path d="M1.5 2 L10 9.5 M10 2 L1.5 9.5" stroke="#1e98e6" stroke-width="3"/></svg>
<svg style="left:28px;top:982px" width="21" height="21"><circle cx="10.5" cy="10.5" r="10" fill="#4a80c0"/><circle cx="10.5" cy="5.5" r="1.8" fill="#fff"/><rect x="9" y="8.5" width="3" height="8" fill="#fff"/></svg>
<div class="t" style="left:70.5px;top:987px;font-size:13px;color:#333;letter-spacing:0.35px">7.2.9043.10 Standard</div>
<div style="left:229px;top:983px;width:1px;height:19px;background:#c0c0c0"></div>
<div style="left:399px;top:983px;width:1px;height:19px;background:#c0c0c0"></div>
<div style="left:578px;top:983px;width:1px;height:19px;background:#c0c0c0"></div>
<div style="left:727px;top:983px;width:1px;height:19px;background:#c0c0c0"></div>
<div style="left:875px;top:983px;width:1px;height:19px;background:#c0c0c0"></div>
<div style="left:1197px;top:983px;width:1px;height:19px;background:#c0c0c0"></div>
<svg style="left:243px;top:981px" width="17" height="21"><defs><linearGradient id="dbg" x1="0" y1="0" x2="1" y2="0"><stop offset="0" stop-color="#fff4d0"/><stop offset="0.5" stop-color="#f2c050"/><stop offset="1" stop-color="#d88a30"/></linearGradient></defs><rect x="1" y="1.5" width="15" height="18.5" rx="3" fill="url(#dbg)" stroke="#d09040" stroke-width="1"/><path d="M1.5 8 h14 M1.5 13.5 h14" stroke="#c88030" stroke-width="1"/></svg>
<div class="t" style="left:282px;top:987px;font-size:13.8px;color:#333">localhost (utf8)</div>
<svg style="left:412px;top:983px" width="19" height="19"><defs><linearGradient id="pg412983" x1="0" y1="0" x2="0" y2="1"><stop offset="0" stop-color="#b8e070"/><stop offset="1" stop-color="#5c9c24"/></linearGradient></defs><ellipse cx="9.2" cy="14.6" rx="8.6" ry="3.6" fill="url(#pg412983)" stroke="#5a8a2a" stroke-width="0.6"/><rect x="7.3" y="9" width="3.8" height="4" fill="#d89a68"/><ellipse cx="9.2" cy="6.2" rx="5" ry="5.8" fill="#b86e34"/><ellipse cx="9.2" cy="7.8" rx="3" ry="4" fill="#f6cfa0"/><path d="M5.5 5 q3.5 -3 7.5 0 q-1.5 -1 -3.7 -0.6 q-2.2 -0.4 -3.8 0.6" fill="#8a4a1a"/></svg>
<div class="t" style="left:451px;top:987px;font-size:13px;color:#333">NIKOLAY (MAIN)</div>
<svg style="left:591px;top:983px" width="19" height="19"><rect x="0.5" y="0.5" width="17" height="17" rx="1.5" fill="#f6f8fc" stroke="#8a9ad0"/><rect x="1" y="1" width="16" height="5" fill="#e86a58"/><text x="9" y="15.5" font-family="Liberation Sans" font-size="10.5" font-weight="700" text-anchor="middle" fill="#34405a" letter-spacing="-0.3">31</text></svg>
<div class="t" style="left:631.5px;top:987px;font-size:13px;color:#333;letter-spacing:0.5px">23.08.2024</div>
<div class="t" style="left:761px;top:987px;font-size:13px;color:#333;letter-spacing:0.65px">00:00:00:001</div>
<div class="t" style="left:888.5px;top:987px;font-size:13.3px;color:#333">Μουσική και χοροί</div>
<svg style="left:1205px;top:984px" width="24" height="22"><path d="M18.4 4.1 l0.9 1.3 l1.3 0.9 l-1.3 0.9 l-0.9 1.3 l-0.9 -1.3 l-1.3 -0.9 l1.3 -0.9 z" fill="#777"/><path d="M13.4 9.3 l0.9 1.3 l1.3 0.9 l-1.3 0.9 l-0.9 1.3 l-0.9 -1.3 l-1.3 -0.9 l1.3 -0.9 z" fill="#777"/><path d="M18.4 9.3 l0.9 1.3 l1.3 0.9 l-1.3 0.9 l-0.9 1.3 l-0.9 -1.3 l-1.3 -0.9 l1.3 -0.9 z" fill="#777"/><path d="M8.3 14.2 l0.9 1.3 l1.3 0.9 l-1.3 0.9 l-0.9 1.3 l-0.9 -1.3 l-1.3 -0.9 l1.3 -0.9 z" fill="#777"/><path d="M13.4 14.2 l0.9 1.3 l1.3 0.9 l-1.3 0.9 l-0.9 1.3 l-0.9 -1.3 l-1.3 -0.9 l1.3 -0.9 z" fill="#777"/><path d="M18.4 14.2 l0.9 1.3 l1.3 0.9 l-1.3 0.9 l-0.9 1.3 l-0.9 -1.3 l-1.3 -0.9 l1.3 -0.9 z" fill="#777"/></svg>
</body></html>
